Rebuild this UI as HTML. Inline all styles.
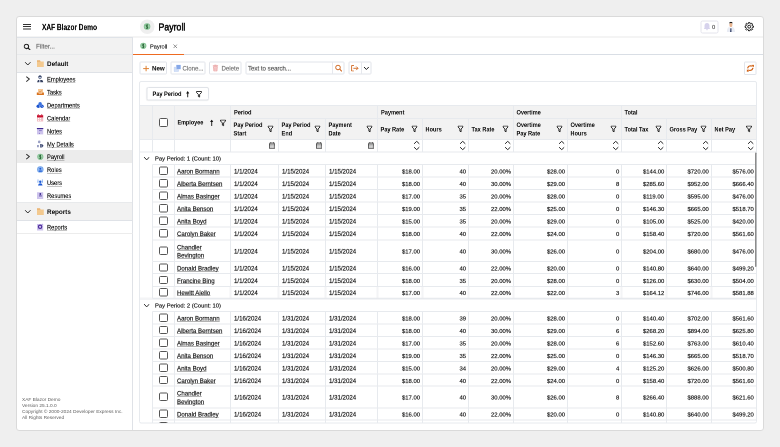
<!DOCTYPE html>
<html><head><meta charset="utf-8"><style>
html,body{margin:0;padding:0;}
body{width:780px;height:447px;background:#efefef;position:relative;overflow:hidden;font-family:"Liberation Sans", sans-serif;}
#w{position:absolute;left:0;top:0;width:1560px;height:894px;transform:scale(0.5);transform-origin:0 0;}
.r{position:absolute;}
.t{position:absolute;white-space:nowrap;will-change:transform;}
#grid{position:absolute;left:0;top:0;width:1560px;height:846.40px;overflow:hidden;}
</style></head><body><div id="w">
<div class="r" style="left:32.00px;top:32.00px;width:1496.00px;height:830.00px;background:#fff;border:2px solid #dadada;box-sizing:border-box;border-radius:6px"></div>
<div class="r" style="left:34.00px;top:73.00px;width:1492.00px;height:2.00px;background:#e9e9e9"></div>
<div class="r" style="left:46.00px;top:48.00px;width:16.40px;height:2.00px;background:#333"></div>
<div class="r" style="left:46.00px;top:52.40px;width:16.40px;height:2.00px;background:#333"></div>
<div class="r" style="left:46.00px;top:56.80px;width:16.40px;height:2.00px;background:#333"></div>
<div class="t" style="left:83.60px;top:44.40px;line-height:20px;font-size:16.20px;font-weight:700;color:#111;transform:scaleX(0.81);transform-origin:0 50%;-webkit-text-stroke:0.36px #111;">XAF Blazor Demo</div>
<div class="r" style="left:279.60px;top:38.60px;width:29.60px;height:29.60px;background:#efefef;border-radius:50%"></div>
<svg class="r" style="left:283.27px;top:43.32px;width:21.00px;height:21.00px" viewBox="0 0 10 10"><circle cx="5.3" cy="4.8" r="3.1" fill="#84c293"/><circle cx="5.3" cy="4.8" r="2.3" fill="#9fd0aa"/><path d="M5.9 3.3Q4.3 3.1 4.4 4.2Q4.6 4.9 5.4 5Q6.2 5.3 5.9 6.2Q5.2 6.8 4.3 6.3M5.4 2.8V7" fill="none" stroke="#1e5a2b" stroke-width="0.75"/></svg>
<div class="t" style="left:317.20px;top:43.60px;line-height:20px;font-size:20.00px;font-weight:400;color:#161616;transform:scaleX(0.875);transform-origin:0 50%;-webkit-text-stroke:1.20px #161616;">Payroll</div>
<div class="r" style="left:1400.60px;top:40.60px;width:36.40px;height:26.40px;border:2px solid #e4e4ec;border-radius:4px;box-sizing:border-box"></div>
<svg class="r" style="left:1407.00px;top:45.00px;width:14.00px;height:16.00px" viewBox="0 0 7 8"><path d="M3.5 0.6c-1.6 0-2.5 1.2-2.5 2.8v2.2L0.2 6.6h6.6L6 5.6V3.4C6 1.8 5.1 0.6 3.5 0.6z" fill="#d6d2ec"/><circle cx="3.5" cy="7.2" r="0.8" fill="#d6d2ec"/></svg>
<div class="t" style="left:1424.40px;top:44.00px;line-height:20px;font-size:11.60px;font-weight:400;color:#555;-webkit-text-stroke:0.34px #555;">0</div>
<svg class="r" style="left:1453.00px;top:42.80px;width:17.60px;height:21.20px" viewBox="0 0 8.8 10.6"><path d="M0.3 10.6 Q0.5 6.6 2.5 5.6 L4.4 6.6 L6.3 5.6 Q8.3 6.6 8.5 10.6z" fill="#e9ecf4"/><rect x="3.0" y="1.6" width="2.8" height="3.9" rx="1.2" fill="#e8b48f"/><path d="M2.5 2.4 Q2.6 0.3 4.4 0.3 Q6.2 0.3 6.3 2.4 L5.9 1.8 Q4.4 1.2 2.9 1.8z" fill="#1d1d1d"/><path d="M3.9 6.8 L4.9 6.8 L5.0 10.4 L3.6 10.4z" fill="#2f3d63"/></svg>
<svg class="r" style="left:1489.20px;top:43.80px;width:18.80px;height:18.80px" viewBox="0 0 9.4 9.4"><g transform="translate(4.7 4.7)"><path d="M3.16 -0.76 L4.31 -0.58 L4.31 0.58 L3.16 0.76 L2.77 1.70 L3.46 2.64 L2.64 3.46 L1.70 2.77 L0.76 3.16 L0.58 4.31 L-0.58 4.31 L-0.76 3.16 L-1.70 2.77 L-2.64 3.46 L-3.46 2.64 L-2.77 1.70 L-3.16 0.76 L-4.31 0.58 L-4.31 -0.58 L-3.16 -0.76 L-2.77 -1.70 L-3.46 -2.64 L-2.64 -3.46 L-1.70 -2.77 L-0.76 -3.16 L-0.58 -4.31 L0.58 -4.31 L0.76 -3.16 L1.70 -2.77 L2.64 -3.46 L3.46 -2.64 L2.77 -1.70Z" fill="none" stroke="#111" stroke-width="0.95" stroke-linejoin="round"/><circle r="1.45" fill="none" stroke="#111" stroke-width="0.95"/></g></svg>
<div class="r" style="left:264.00px;top:74.00px;width:2.00px;height:786.00px;background:#dfe2e7"></div>
<div class="r" style="left:34.00px;top:74.60px;width:230.00px;height:34.00px;background:#f2f2f2"></div>
<div class="r" style="left:34.00px;top:73.60px;width:231.00px;height:2.00px;background:#dfe3e8"></div>
<div class="r" style="left:34.00px;top:107.80px;width:231.00px;height:2.00px;background:#dfe2e7"></div>
<svg class="r" style="left:47.20px;top:87.00px;width:15.00px;height:13.00px" viewBox="0 0 7.5 6.5"><circle cx="2.9" cy="2.9" r="2.2" fill="none" stroke="#222" stroke-width="1.05"/><path d="M4.5 4.5 L6.7 6.5" stroke="#222" stroke-width="1.1"/></svg>
<div class="t" style="left:71.60px;top:83.20px;line-height:20px;font-size:12.60px;font-weight:400;color:#6f6f6f;-webkit-text-stroke:0.34px #6f6f6f;">Filter...</div>
<div class="r" style="left:34.00px;top:109.20px;width:230.00px;height:36.00px;background:#f2f2f2"></div>
<div class="r" style="left:34.00px;top:144.20px;width:231.00px;height:2.00px;background:#dfe2e7"></div>
<svg class="r" style="left:49.20px;top:122.80px;width:13.20px;height:8.80px" viewBox="0 0 6.6 4.4"><path d="M0.6 0.7 L3.3 3.5 L6 0.7" fill="none" stroke="#2a2a2a" stroke-width="1"/></svg>
<svg class="r" style="left:70.00px;top:117.20px;width:20.00px;height:20.00px" viewBox="0 0 10 10"><path d="M2 2h3l0.5 1H8.8V8.4H2z" fill="#f3c98f"/><path d="M2 2h3l0.5 1H2z" fill="#e6a661"/></svg>
<div class="t" style="left:93.80px;top:117.60px;line-height:20px;font-size:13.00px;font-weight:700;color:#111;transform:scaleX(0.97);transform-origin:0 50%;-webkit-text-stroke:0.08px #111;">Default</div>
<svg class="r" style="left:51.40px;top:152.20px;width:9.60px;height:12.40px" viewBox="0 0 4.8 6.2"><path d="M0.8 0.6 L3.8 3.1 L0.8 5.6" fill="none" stroke="#333" stroke-width="1.05"/></svg>
<svg class="r" style="left:70.00px;top:148.40px;width:20.00px;height:20.00px" viewBox="0 0 10 10"><circle cx="5.0" cy="3.3" r="1.45" fill="#c2c7dc" stroke="#3b4a6b" stroke-width="0.6"/><path d="M3.5 3.0Q3.6 1.6 5 1.6Q6.4 1.6 6.5 3.0z" fill="#3b4a6b"/><path d="M2 8.3L3 6.1H4.2L4 8.3z" fill="#34405e"/><path d="M5.1 6.1H6.9Q8.2 6.7 8.2 8.3H5.3z" fill="#34405e"/><path d="M4.1 6.3h1.1v2H4z" fill="#a9b1cb"/></svg>
<div class="t" style="left:93.80px;top:149.20px;line-height:20px;font-size:11.90px;font-weight:400;color:#1a1a1a;transform:scaleX(0.965);transform-origin:0 50%;-webkit-text-stroke:0.34px #1a1a1a;text-decoration:underline;text-decoration-color:#8a8a8a;text-underline-offset:2px;text-decoration-thickness:1px">Employees</div>
<svg class="r" style="left:70.00px;top:174.26px;width:20.00px;height:20.00px" viewBox="0 0 10 10"><path d="M3 2h5v4.2H3z" fill="#f5c795"/><path d="M4 4.4L5 5.3 6.6 3.8" fill="none" stroke="#d9731f" stroke-width="0.7"/><path d="M1.8 5.6H3.2L3.8 6.6H7L7.5 5.6H8.9V8.1H1.8z" fill="#d9731f"/></svg>
<div class="t" style="left:93.80px;top:175.06px;line-height:20px;font-size:11.90px;font-weight:400;color:#1a1a1a;transform:scaleX(0.965);transform-origin:0 50%;-webkit-text-stroke:0.34px #1a1a1a;text-decoration:underline;text-decoration-color:#8a8a8a;text-underline-offset:2px;text-decoration-thickness:1px">Tasks</div>
<svg class="r" style="left:70.00px;top:200.12px;width:20.00px;height:20.00px" viewBox="0 0 10 10"><circle cx="5.1" cy="3.9" r="1.8" fill="#3b74e0"/><circle cx="3.3" cy="6.3" r="1.8" fill="#1d55d0"/><circle cx="6.9" cy="6.3" r="1.8" fill="#1d55d0"/><circle cx="4.3" cy="5.8" r="0.4" fill="#fff"/><circle cx="4.8" cy="6.6" r="0.4" fill="#fff"/><circle cx="6.2" cy="5.8" r="0.4" fill="#fff"/><circle cx="7.2" cy="6.6" r="0.4" fill="#fff"/></svg>
<div class="t" style="left:93.80px;top:200.92px;line-height:20px;font-size:11.90px;font-weight:400;color:#1a1a1a;transform:scaleX(0.965);transform-origin:0 50%;-webkit-text-stroke:0.34px #1a1a1a;text-decoration:underline;text-decoration-color:#8a8a8a;text-underline-offset:2px;text-decoration-thickness:1px">Departments</div>
<svg class="r" style="left:70.00px;top:225.98px;width:20.00px;height:20.00px" viewBox="0 0 10 10"><path d="M2 4.2h6.2v4.3H2z" fill="#f1bcc3"/><path d="M2 2.2h6.2v2.2H2z" fill="#c8102e"/><circle cx="3.3" cy="1.8" r="0.6" fill="#c8102e"/><circle cx="6.7" cy="1.8" r="0.6" fill="#c8102e"/><path d="M3 5h1v1H3zM4.9 5h1v1h-1zM3 6.8h1v1H3zM4.9 6.8h1v1h-1z" fill="#fff"/></svg>
<div class="t" style="left:93.80px;top:226.78px;line-height:20px;font-size:11.90px;font-weight:400;color:#1a1a1a;transform:scaleX(0.965);transform-origin:0 50%;-webkit-text-stroke:0.34px #1a1a1a;text-decoration:underline;text-decoration-color:#8a8a8a;text-underline-offset:2px;text-decoration-thickness:1px">Calendar</div>
<svg class="r" style="left:70.00px;top:251.84px;width:20.00px;height:20.00px" viewBox="0 0 10 10"><path d="M2 3h6.2v5.4H2z" fill="#cdc3ec"/><path d="M1.9 2h6.4v1.1H1.9z" fill="#3d2a8f"/><path d="M4 4.6h2.8" stroke="#6d5cb8" stroke-width="0.7"/><circle cx="4.4" cy="7.3" r="0.5" fill="#6d5cb8"/></svg>
<div class="t" style="left:93.80px;top:252.64px;line-height:20px;font-size:11.90px;font-weight:400;color:#1a1a1a;transform:scaleX(0.965);transform-origin:0 50%;-webkit-text-stroke:0.34px #1a1a1a;text-decoration:underline;text-decoration-color:#8a8a8a;text-underline-offset:2px;text-decoration-thickness:1px">Notes</div>
<svg class="r" style="left:70.00px;top:277.70px;width:20.00px;height:20.00px" viewBox="0 0 10 10"><circle cx="4.2" cy="2.9" r="1.3" fill="#9aa0c4"/><path d="M2 6h1.9v2.2H2z" fill="#9aa0c4"/><path d="M5 5.1H7L8.6 6.8 7 8.5H5z" fill="#3a4670"/><path d="M6.1 5.1v3.4" stroke="#fff" stroke-width="0.5"/></svg>
<div class="t" style="left:93.80px;top:278.50px;line-height:20px;font-size:11.90px;font-weight:400;color:#1a1a1a;transform:scaleX(0.965);transform-origin:0 50%;-webkit-text-stroke:0.34px #1a1a1a;text-decoration:underline;text-decoration-color:#8a8a8a;text-underline-offset:2px;text-decoration-thickness:1px">My Details</div>
<div class="r" style="left:34.00px;top:300.36px;width:230.00px;height:25.86px;background:#ececec"></div>
<svg class="r" style="left:51.40px;top:307.36px;width:9.60px;height:12.40px" viewBox="0 0 4.8 6.2"><path d="M0.8 0.6 L3.8 3.1 L0.8 5.6" fill="none" stroke="#333" stroke-width="1.05"/></svg>
<svg class="r" style="left:70.00px;top:303.56px;width:20.00px;height:20.00px" viewBox="0 0 10 10"><circle cx="5.3" cy="4.8" r="3.1" fill="#84c293"/><circle cx="5.3" cy="4.8" r="2.3" fill="#9fd0aa"/><path d="M5.9 3.3Q4.3 3.1 4.4 4.2Q4.6 4.9 5.4 5Q6.2 5.3 5.9 6.2Q5.2 6.8 4.3 6.3M5.4 2.8V7" fill="none" stroke="#1e5a2b" stroke-width="0.75"/></svg>
<div class="t" style="left:93.80px;top:304.36px;line-height:20px;font-size:11.90px;font-weight:400;color:#1a1a1a;transform:scaleX(0.965);transform-origin:0 50%;-webkit-text-stroke:0.34px #1a1a1a;text-decoration:underline;text-decoration-color:#8a8a8a;text-underline-offset:2px;text-decoration-thickness:1px">Payroll</div>
<svg class="r" style="left:70.00px;top:329.42px;width:20.00px;height:20.00px" viewBox="0 0 10 10"><circle cx="5.3" cy="4.9" r="3.2" fill="#6fa2ea"/><circle cx="5.3" cy="4.9" r="2.5" fill="#8db6f0"/><circle cx="5.3" cy="4.3" r="0.95" fill="#1f5bd6"/><path d="M3.9 6h2.9v1.2H3.9z" fill="#1f5bd6"/></svg>
<div class="t" style="left:93.80px;top:330.22px;line-height:20px;font-size:11.90px;font-weight:400;color:#1a1a1a;transform:scaleX(0.965);transform-origin:0 50%;-webkit-text-stroke:0.34px #1a1a1a;text-decoration:underline;text-decoration-color:#8a8a8a;text-underline-offset:2px;text-decoration-thickness:1px">Roles</div>
<svg class="r" style="left:70.00px;top:355.28px;width:20.00px;height:20.00px" viewBox="0 0 10 10"><circle cx="5.3" cy="4.3" r="1.2" fill="#1f5bd6"/><path d="M3 7.9Q3.4 5.8 5.3 5.8Q7.2 5.8 7.6 7.9z" fill="#1f5bd6"/><circle cx="3" cy="2.6" r="0.7" fill="#6ea0f0"/><path d="M2.4 3.5h1.1v1.8H2.4z" fill="#8ab4f2"/><circle cx="7.4" cy="2.6" r="0.7" fill="#6ea0f0"/><path d="M6.9 3.5h1.1v1.8H6.9z" fill="#8ab4f2"/></svg>
<div class="t" style="left:93.80px;top:356.08px;line-height:20px;font-size:11.90px;font-weight:400;color:#1a1a1a;transform:scaleX(0.965);transform-origin:0 50%;-webkit-text-stroke:0.34px #1a1a1a;text-decoration:underline;text-decoration-color:#8a8a8a;text-underline-offset:2px;text-decoration-thickness:1px">Users</div>
<svg class="r" style="left:70.00px;top:381.14px;width:20.00px;height:20.00px" viewBox="0 0 10 10"><path d="M2 1.7h6.2v6.8H2z" fill="#cdc3ec"/><circle cx="5.3" cy="3.5" r="0.9" fill="#3d2a8f"/><path d="M4 5.1h2.8v0.8H4z" fill="#4a3a9a"/><path d="M4 6.6h2.8" stroke="#e9e4f7" stroke-width="0.6"/></svg>
<div class="t" style="left:93.80px;top:381.94px;line-height:20px;font-size:11.90px;font-weight:400;color:#1a1a1a;transform:scaleX(0.965);transform-origin:0 50%;-webkit-text-stroke:0.34px #1a1a1a;text-decoration:underline;text-decoration-color:#8a8a8a;text-underline-offset:2px;text-decoration-thickness:1px">Resumes</div>
<div class="r" style="left:34.00px;top:404.00px;width:231.00px;height:2.00px;background:#dfe2e7"></div>
<div class="r" style="left:34.00px;top:405.20px;width:230.00px;height:36.00px;background:#f2f2f2"></div>
<div class="r" style="left:34.00px;top:440.20px;width:231.00px;height:2.00px;background:#dfe2e7"></div>
<svg class="r" style="left:49.20px;top:418.80px;width:13.20px;height:8.80px" viewBox="0 0 6.6 4.4"><path d="M0.6 0.7 L3.3 3.5 L6 0.7" fill="none" stroke="#2a2a2a" stroke-width="1"/></svg>
<svg class="r" style="left:70.00px;top:413.20px;width:20.00px;height:20.00px" viewBox="0 0 10 10"><path d="M2 2h3l0.5 1H8.8V8.4H2z" fill="#f3c98f"/><path d="M2 2h3l0.5 1H2z" fill="#e6a661"/></svg>
<div class="t" style="left:93.80px;top:413.60px;line-height:20px;font-size:13.00px;font-weight:700;color:#111;transform:scaleX(0.97);transform-origin:0 50%;-webkit-text-stroke:0.08px #111;">Reports</div>
<svg class="r" style="left:70.00px;top:444.40px;width:20.00px;height:20.00px" viewBox="0 0 10 10"><path d="M2 2h6.2v6.5H2z" fill="#cdc3ec"/><circle cx="5.1" cy="4.8" r="1.7" fill="none" stroke="#4b2a9a" stroke-width="1.1"/><path d="M6.8 2.6l0.9-0.5" stroke="#8f7cd0" stroke-width="0.6"/></svg>
<div class="t" style="left:93.80px;top:445.20px;line-height:20px;font-size:11.90px;font-weight:400;color:#1a1a1a;transform:scaleX(0.965);transform-origin:0 50%;-webkit-text-stroke:0.34px #1a1a1a;text-decoration:underline;text-decoration-color:#8a8a8a;text-underline-offset:2px;text-decoration-thickness:1px">Reports</div>
<div class="r" style="left:34.00px;top:466.00px;width:231.00px;height:2.00px;background:#ececec"></div>
<div class="t" style="left:44.40px;top:792.60px;line-height:12px;font-size:9.60px;font-weight:400;color:#5e5e5e;">XAF Blazor Demo</div>
<div class="t" style="left:44.40px;top:804.80px;line-height:12px;font-size:9.60px;font-weight:400;color:#5e5e5e;">Version 25.1.0.0</div>
<div class="t" style="left:44.40px;top:817.00px;line-height:12px;font-size:9.60px;font-weight:400;color:#5e5e5e;">Copyright © 2000-2024 Developer Express Inc.</div>
<div class="t" style="left:44.40px;top:829.20px;line-height:12px;font-size:9.60px;font-weight:400;color:#5e5e5e;">All Rights Reserved</div>
<div class="r" style="left:265.00px;top:108.00px;width:1261.00px;height:2.00px;background:#d9dee5"></div>
<svg class="r" style="left:276.20px;top:82.40px;width:20.00px;height:20.00px" viewBox="0 0 10 10"><circle cx="5.3" cy="4.8" r="3.1" fill="#84c293"/><circle cx="5.3" cy="4.8" r="2.3" fill="#9fd0aa"/><path d="M5.9 3.3Q4.3 3.1 4.4 4.2Q4.6 4.9 5.4 5Q6.2 5.3 5.9 6.2Q5.2 6.8 4.3 6.3M5.4 2.8V7" fill="none" stroke="#1e5a2b" stroke-width="0.75"/></svg>
<div class="t" style="left:299.60px;top:82.80px;line-height:20px;font-size:11.80px;font-weight:400;color:#1a1a1a;transform:scaleX(0.95);transform-origin:0 50%;-webkit-text-stroke:0.34px #1a1a1a;">Payroll</div>
<svg class="r" style="left:346.00px;top:87.60px;width:9.20px;height:9.20px" viewBox="0 0 4.6 4.6"><path d="M0.5 0.5L4.1 4.1M4.1 0.5L0.5 4.1" stroke="#666" stroke-width="0.7"/></svg>
<div class="r" style="left:266.00px;top:107.60px;width:102.00px;height:2.40px;background:#ee6a21"></div>
<div class="r" style="left:278.60px;top:123.00px;width:55.40px;height:26.20px;border:2px solid #e1e4ea;border-radius:2.5px;box-sizing:border-box;background:#fff"></div>
<svg class="r" style="left:285.60px;top:130.60px;width:12.40px;height:12.40px" viewBox="0 0 6.2 6.2"><path d="M3.1 0.2V6M0.2 3.1H6" stroke="#dd7d2c" stroke-width="0.95"/></svg>
<div class="t" style="left:303.80px;top:127.20px;line-height:20px;font-size:12.40px;font-weight:700;color:#111;-webkit-text-stroke:0.08px #111;">New</div>
<div class="r" style="left:341.40px;top:123.00px;width:69.60px;height:26.20px;border:2px solid #e1e4ea;border-radius:2.5px;box-sizing:border-box;background:#fff"></div>
<svg class="r" style="left:347.00px;top:129.20px;width:15.00px;height:14.40px" viewBox="0 0 7.5 7.2"><rect x="2.8" y="0.3" width="4.4" height="4.4" fill="#86a8e8"/><path d="M0.5 2.8H2.6V5H5V6.9H0.5z" fill="#d5e2f7" stroke="#b6cbf0" stroke-width="0.5"/></svg>
<div class="t" style="left:365.40px;top:127.20px;line-height:20px;font-size:12.20px;font-weight:400;color:#777;-webkit-text-stroke:0.34px #777;">Clone...</div>
<div class="r" style="left:418.40px;top:123.00px;width:64.80px;height:26.20px;border:2px solid #e1e4ea;border-radius:2.5px;box-sizing:border-box;background:#fff"></div>
<svg class="r" style="left:425.20px;top:129.00px;width:11.60px;height:14.40px" viewBox="0 0 5.8 7.2"><path d="M0.2 1.3h5.4" stroke="#e48a8a" stroke-width="0.8"/><path d="M1.9 0.4h2" stroke="#e48a8a" stroke-width="0.7"/><path d="M1 2.2h3.8l-0.35 4.5H1.35z" fill="#fbe3e3" stroke="#e48a8a" stroke-width="0.6"/><path d="M2.3 3v3M3.5 3v3" stroke="#e48a8a" stroke-width="0.5"/></svg>
<div class="t" style="left:443.00px;top:127.20px;line-height:20px;font-size:12.20px;font-weight:400;color:#777;-webkit-text-stroke:0.34px #777;">Delete</div>
<div class="r" style="left:491.20px;top:123.00px;width:198.20px;height:26.20px;border:2px solid #e1e4ea;border-radius:2.5px;box-sizing:border-box;background:#fff"></div>
<div class="r" style="left:664.00px;top:124.00px;width:2.00px;height:24.20px;background:#e6e8ed"></div>
<div class="t" style="left:496.20px;top:127.00px;line-height:20px;font-size:12.20px;font-weight:400;color:#555;-webkit-text-stroke:0.34px #555;">Text to search...</div>
<svg class="r" style="left:669.60px;top:129.20px;width:14.80px;height:14.80px" viewBox="0 0 7.4 7.4"><circle cx="3" cy="3" r="2.3" fill="none" stroke="#d0661f" stroke-width="1"/><path d="M4.7 4.7L6.9 6.9" stroke="#d0661f" stroke-width="1.1"/></svg>
<div class="r" style="left:697.20px;top:123.00px;width:46.20px;height:26.20px;border:2px solid #e1e4ea;border-radius:2.5px;box-sizing:border-box;background:#fff"></div>
<div class="r" style="left:722.40px;top:124.00px;width:2.00px;height:24.20px;background:#e6e8ed"></div>
<svg class="r" style="left:702.40px;top:129.60px;width:15.20px;height:13.20px" viewBox="0 0 7.6 6.6"><path d="M3 0.5H0.6v5.6H3" fill="none" stroke="#d0661f" stroke-width="0.9"/><path d="M2.4 3.3H7M5.2 1.5L7 3.3 5.2 5.1" fill="none" stroke="#d0661f" stroke-width="0.9"/></svg>
<svg class="r" style="left:727.00px;top:132.80px;width:11.60px;height:7.20px" viewBox="0 0 5.8 3.6"><path d="M0.5 0.5L2.9 3 5.3 0.5" fill="none" stroke="#222" stroke-width="1"/></svg>
<div class="r" style="left:1488.40px;top:122.80px;width:24.80px;height:26.80px;border:2px solid #e1e4ea;border-radius:2px;box-sizing:border-box;background:#fff"></div>
<svg class="r" style="left:1493.40px;top:129.20px;width:15.20px;height:14.80px" viewBox="0 0 7.6 7.4"><path d="M1.1 3.9Q1.6 1.4 4.2 1.3Q5.3 1.3 6.0 1.9" fill="none" stroke="#cf5f12" stroke-width="1.1"/><path d="M5.0 0.3L7.5 0.2 7.2 2.9z" fill="#cf5f12"/><path d="M6.5 3.4Q6.0 5.9 3.4 6.0Q2.3 6.0 1.6 5.4" fill="none" stroke="#cf5f12" stroke-width="1.1"/><path d="M2.6 7.1L0.1 7.2 0.4 4.5z" fill="#cf5f12"/></svg>
<div class="r" style="left:277.60px;top:161.60px;width:1236.80px;height:685.80px;border:2px solid #e7eaee;box-sizing:border-box;border-radius:4px"></div>
<div class="r" style="left:293.40px;top:174.20px;width:124.80px;height:27.00px;border:2px solid #e0e3e8;border-radius:4px;box-sizing:border-box;box-shadow:0 1px 2px rgba(0,0,0,0.08)"></div>
<div class="t" style="left:305.00px;top:178.20px;line-height:20px;font-size:12.20px;font-weight:700;color:#161616;transform:scaleX(0.92);transform-origin:0 50%;-webkit-text-stroke:0.10px #161616;">Pay Period</div>
<svg class="r" style="left:371.80px;top:182.00px;width:6.80px;height:13.20px" viewBox="0 0 3.4 6.6"><path d="M1.7 1.6V6.5" stroke="#111" stroke-width="0.9"/><path d="M0.1 2.4L1.7 0.1 3.3 2.4z" fill="#111"/></svg>
<svg class="r" style="left:391.60px;top:181.80px;width:12.00px;height:13.60px" viewBox="0 0 6 6.8"><path d="M0.5 0.5H5.5V1.5L3.6 3.5V6.3L2.4 5.7V3.5L0.5 1.5z" fill="none" stroke="#1a1a1a" stroke-width="0.9" stroke-linejoin="round"/></svg>
<div class="r" style="left:279.60px;top:210.80px;width:1232.80px;height:68.00px;background:#f2f2f2"></div>
<div class="r" style="left:278.60px;top:209.80px;width:1234.80px;height:2.00px;background:#e7eaee"></div>
<div class="r" style="left:461.00px;top:235.60px;width:1052.40px;height:2.00px;background:#e7eaee"></div>
<div class="r" style="left:278.60px;top:277.80px;width:1234.80px;height:2.00px;background:#e7eaee"></div>
<div class="r" style="left:278.60px;top:302.80px;width:1234.80px;height:2.00px;background:#e7eaee"></div>
<div class="r" style="left:304.40px;top:210.80px;width:2.00px;height:93.00px;background:#e7eaee"></div>
<div class="r" style="left:348.00px;top:210.80px;width:2.00px;height:93.00px;background:#e7eaee"></div>
<div class="r" style="left:460.00px;top:210.80px;width:2.00px;height:93.00px;background:#e7eaee"></div>
<div class="r" style="left:754.00px;top:210.80px;width:2.00px;height:93.00px;background:#e7eaee"></div>
<div class="r" style="left:1026.00px;top:210.80px;width:2.00px;height:93.00px;background:#e7eaee"></div>
<div class="r" style="left:1242.00px;top:210.80px;width:2.00px;height:93.00px;background:#e7eaee"></div>
<div class="r" style="left:556.20px;top:236.60px;width:2.00px;height:67.20px;background:#e7eaee"></div>
<div class="r" style="left:650.00px;top:236.60px;width:2.00px;height:67.20px;background:#e7eaee"></div>
<div class="r" style="left:844.00px;top:236.60px;width:2.00px;height:67.20px;background:#e7eaee"></div>
<div class="r" style="left:936.00px;top:236.60px;width:2.00px;height:67.20px;background:#e7eaee"></div>
<div class="r" style="left:1133.60px;top:236.60px;width:2.00px;height:67.20px;background:#e7eaee"></div>
<div class="r" style="left:1331.80px;top:236.60px;width:2.00px;height:67.20px;background:#e7eaee"></div>
<div class="r" style="left:1421.60px;top:236.60px;width:2.00px;height:67.20px;background:#e7eaee"></div>
<div class="r" style="left:318.00px;top:236.40px;width:18.00px;height:17.40px;border:2px solid #555;border-radius:3px;box-sizing:border-box;background:#fff"></div>
<div class="t" style="left:354.60px;top:235.00px;line-height:20px;font-size:12.40px;font-weight:700;color:#161616;transform:scaleX(0.88);transform-origin:0 50%;-webkit-text-stroke:0.10px #161616;">Employee</div>
<svg class="r" style="left:419.80px;top:239.20px;width:6.80px;height:13.20px" viewBox="0 0 3.4 6.6"><path d="M1.7 1.6V6.5" stroke="#111" stroke-width="0.9"/><path d="M0.1 2.4L1.7 0.1 3.3 2.4z" fill="#111"/></svg>
<svg class="r" style="left:439.60px;top:239.00px;width:12.00px;height:13.60px" viewBox="0 0 6 6.8"><path d="M0.5 0.5H5.5V1.5L3.6 3.5V6.3L2.4 5.7V3.5L0.5 1.5z" fill="none" stroke="#1a1a1a" stroke-width="0.9" stroke-linejoin="round"/></svg>
<div class="t" style="left:467.60px;top:214.60px;line-height:20px;font-size:12.20px;font-weight:700;color:#161616;transform:scaleX(0.92);transform-origin:0 50%;-webkit-text-stroke:0.10px #161616;">Period</div>
<div class="t" style="left:761.60px;top:214.60px;line-height:20px;font-size:12.20px;font-weight:700;color:#161616;transform:scaleX(0.92);transform-origin:0 50%;-webkit-text-stroke:0.10px #161616;">Payment</div>
<div class="t" style="left:1033.20px;top:214.60px;line-height:20px;font-size:12.20px;font-weight:700;color:#161616;transform:scaleX(0.92);transform-origin:0 50%;-webkit-text-stroke:0.10px #161616;">Overtime</div>
<div class="t" style="left:1249.20px;top:214.60px;line-height:20px;font-size:12.20px;font-weight:700;color:#161616;transform:scaleX(0.92);transform-origin:0 50%;-webkit-text-stroke:0.10px #161616;">Total</div>
<div class="t" style="left:467.20px;top:240.00px;line-height:20px;font-size:12.20px;font-weight:700;color:#161616;transform:scaleX(0.92);transform-origin:0 50%;-webkit-text-stroke:0.10px #161616;">Pay Period</div>
<div class="t" style="left:467.20px;top:256.60px;line-height:20px;font-size:12.20px;font-weight:700;color:#161616;transform:scaleX(0.92);transform-origin:0 50%;-webkit-text-stroke:0.10px #161616;">Start</div>
<svg class="r" style="left:535.40px;top:251.20px;width:12.00px;height:13.60px" viewBox="0 0 6 6.8"><path d="M0.5 0.5H5.5V1.5L3.6 3.5V6.3L2.4 5.7V3.5L0.5 1.5z" fill="none" stroke="#1a1a1a" stroke-width="0.9" stroke-linejoin="round"/></svg>
<div class="t" style="left:563.40px;top:240.00px;line-height:20px;font-size:12.20px;font-weight:700;color:#161616;transform:scaleX(0.92);transform-origin:0 50%;-webkit-text-stroke:0.10px #161616;">Pay Period</div>
<div class="t" style="left:563.40px;top:256.60px;line-height:20px;font-size:12.20px;font-weight:700;color:#161616;transform:scaleX(0.92);transform-origin:0 50%;-webkit-text-stroke:0.10px #161616;">End</div>
<svg class="r" style="left:629.20px;top:251.20px;width:12.00px;height:13.60px" viewBox="0 0 6 6.8"><path d="M0.5 0.5H5.5V1.5L3.6 3.5V6.3L2.4 5.7V3.5L0.5 1.5z" fill="none" stroke="#1a1a1a" stroke-width="0.9" stroke-linejoin="round"/></svg>
<div class="t" style="left:657.20px;top:240.00px;line-height:20px;font-size:12.20px;font-weight:700;color:#161616;transform:scaleX(0.92);transform-origin:0 50%;-webkit-text-stroke:0.10px #161616;">Payment</div>
<div class="t" style="left:657.20px;top:256.60px;line-height:20px;font-size:12.20px;font-weight:700;color:#161616;transform:scaleX(0.92);transform-origin:0 50%;-webkit-text-stroke:0.10px #161616;">Date</div>
<svg class="r" style="left:733.20px;top:251.20px;width:12.00px;height:13.60px" viewBox="0 0 6 6.8"><path d="M0.5 0.5H5.5V1.5L3.6 3.5V6.3L2.4 5.7V3.5L0.5 1.5z" fill="none" stroke="#1a1a1a" stroke-width="0.9" stroke-linejoin="round"/></svg>
<div class="t" style="left:761.20px;top:248.60px;line-height:20px;font-size:12.20px;font-weight:700;color:#161616;transform:scaleX(0.92);transform-origin:0 50%;-webkit-text-stroke:0.10px #161616;">Pay Rate</div>
<svg class="r" style="left:823.20px;top:251.20px;width:12.00px;height:13.60px" viewBox="0 0 6 6.8"><path d="M0.5 0.5H5.5V1.5L3.6 3.5V6.3L2.4 5.7V3.5L0.5 1.5z" fill="none" stroke="#1a1a1a" stroke-width="0.9" stroke-linejoin="round"/></svg>
<div class="t" style="left:851.20px;top:248.60px;line-height:20px;font-size:12.20px;font-weight:700;color:#161616;transform:scaleX(0.92);transform-origin:0 50%;-webkit-text-stroke:0.10px #161616;">Hours</div>
<svg class="r" style="left:915.20px;top:251.20px;width:12.00px;height:13.60px" viewBox="0 0 6 6.8"><path d="M0.5 0.5H5.5V1.5L3.6 3.5V6.3L2.4 5.7V3.5L0.5 1.5z" fill="none" stroke="#1a1a1a" stroke-width="0.9" stroke-linejoin="round"/></svg>
<div class="t" style="left:943.20px;top:248.60px;line-height:20px;font-size:12.20px;font-weight:700;color:#161616;transform:scaleX(0.92);transform-origin:0 50%;-webkit-text-stroke:0.10px #161616;">Tax Rate</div>
<svg class="r" style="left:1005.20px;top:251.20px;width:12.00px;height:13.60px" viewBox="0 0 6 6.8"><path d="M0.5 0.5H5.5V1.5L3.6 3.5V6.3L2.4 5.7V3.5L0.5 1.5z" fill="none" stroke="#1a1a1a" stroke-width="0.9" stroke-linejoin="round"/></svg>
<div class="t" style="left:1033.20px;top:240.00px;line-height:20px;font-size:12.20px;font-weight:700;color:#161616;transform:scaleX(0.92);transform-origin:0 50%;-webkit-text-stroke:0.10px #161616;">Overtime</div>
<div class="t" style="left:1033.20px;top:256.60px;line-height:20px;font-size:12.20px;font-weight:700;color:#161616;transform:scaleX(0.92);transform-origin:0 50%;-webkit-text-stroke:0.10px #161616;">Pay Rate</div>
<svg class="r" style="left:1112.80px;top:251.20px;width:12.00px;height:13.60px" viewBox="0 0 6 6.8"><path d="M0.5 0.5H5.5V1.5L3.6 3.5V6.3L2.4 5.7V3.5L0.5 1.5z" fill="none" stroke="#1a1a1a" stroke-width="0.9" stroke-linejoin="round"/></svg>
<div class="t" style="left:1140.80px;top:240.00px;line-height:20px;font-size:12.20px;font-weight:700;color:#161616;transform:scaleX(0.92);transform-origin:0 50%;-webkit-text-stroke:0.10px #161616;">Overtime</div>
<div class="t" style="left:1140.80px;top:256.60px;line-height:20px;font-size:12.20px;font-weight:700;color:#161616;transform:scaleX(0.92);transform-origin:0 50%;-webkit-text-stroke:0.10px #161616;">Hours</div>
<svg class="r" style="left:1221.20px;top:251.20px;width:12.00px;height:13.60px" viewBox="0 0 6 6.8"><path d="M0.5 0.5H5.5V1.5L3.6 3.5V6.3L2.4 5.7V3.5L0.5 1.5z" fill="none" stroke="#1a1a1a" stroke-width="0.9" stroke-linejoin="round"/></svg>
<div class="t" style="left:1249.20px;top:248.60px;line-height:20px;font-size:12.20px;font-weight:700;color:#161616;transform:scaleX(0.92);transform-origin:0 50%;-webkit-text-stroke:0.10px #161616;">Total Tax</div>
<svg class="r" style="left:1311.00px;top:251.20px;width:12.00px;height:13.60px" viewBox="0 0 6 6.8"><path d="M0.5 0.5H5.5V1.5L3.6 3.5V6.3L2.4 5.7V3.5L0.5 1.5z" fill="none" stroke="#1a1a1a" stroke-width="0.9" stroke-linejoin="round"/></svg>
<div class="t" style="left:1339.00px;top:248.60px;line-height:20px;font-size:12.20px;font-weight:700;color:#161616;transform:scaleX(0.92);transform-origin:0 50%;-webkit-text-stroke:0.10px #161616;">Gross Pay</div>
<svg class="r" style="left:1400.80px;top:251.20px;width:12.00px;height:13.60px" viewBox="0 0 6 6.8"><path d="M0.5 0.5H5.5V1.5L3.6 3.5V6.3L2.4 5.7V3.5L0.5 1.5z" fill="none" stroke="#1a1a1a" stroke-width="0.9" stroke-linejoin="round"/></svg>
<div class="t" style="left:1428.80px;top:248.60px;line-height:20px;font-size:12.20px;font-weight:700;color:#161616;transform:scaleX(0.92);transform-origin:0 50%;-webkit-text-stroke:0.10px #161616;">Net Pay</div>
<svg class="r" style="left:1491.60px;top:251.20px;width:12.00px;height:13.60px" viewBox="0 0 6 6.8"><path d="M0.5 0.5H5.5V1.5L3.6 3.5V6.3L2.4 5.7V3.5L0.5 1.5z" fill="none" stroke="#1a1a1a" stroke-width="0.9" stroke-linejoin="round"/></svg>
<svg class="r" style="left:537.80px;top:283.80px;width:12.40px;height:14.20px" viewBox="0 0 6.2 7.1"><rect x="0.45" y="1.1" width="5.3" height="5.6" rx="0.4" fill="none" stroke="#2e2e2e" stroke-width="0.8"/><path d="M0.5 2.9H5.7" stroke="#2e2e2e" stroke-width="0.7"/><path d="M1.8 0.2V1.5M4.4 0.2V1.5" stroke="#2e2e2e" stroke-width="0.8"/><rect x="1.2" y="3.5" width="3.8" height="2.6" fill="#b5b5b5"/><path d="M3.1 3.5V6.1M1.2 4.8H5" stroke="#fff" stroke-width="0.35"/></svg>
<svg class="r" style="left:631.60px;top:283.80px;width:12.40px;height:14.20px" viewBox="0 0 6.2 7.1"><rect x="0.45" y="1.1" width="5.3" height="5.6" rx="0.4" fill="none" stroke="#2e2e2e" stroke-width="0.8"/><path d="M0.5 2.9H5.7" stroke="#2e2e2e" stroke-width="0.7"/><path d="M1.8 0.2V1.5M4.4 0.2V1.5" stroke="#2e2e2e" stroke-width="0.8"/><rect x="1.2" y="3.5" width="3.8" height="2.6" fill="#b5b5b5"/><path d="M3.1 3.5V6.1M1.2 4.8H5" stroke="#fff" stroke-width="0.35"/></svg>
<svg class="r" style="left:735.60px;top:283.80px;width:12.40px;height:14.20px" viewBox="0 0 6.2 7.1"><rect x="0.45" y="1.1" width="5.3" height="5.6" rx="0.4" fill="none" stroke="#2e2e2e" stroke-width="0.8"/><path d="M0.5 2.9H5.7" stroke="#2e2e2e" stroke-width="0.7"/><path d="M1.8 0.2V1.5M4.4 0.2V1.5" stroke="#2e2e2e" stroke-width="0.8"/><rect x="1.2" y="3.5" width="3.8" height="2.6" fill="#b5b5b5"/><path d="M3.1 3.5V6.1M1.2 4.8H5" stroke="#fff" stroke-width="0.35"/></svg>
<svg class="r" style="left:827.00px;top:281.20px;width:12.80px;height:20.00px" viewBox="0 0 6.4 10"><path d="M0.6 3.3L3.2 0.8 5.8 3.3M0.6 6.7L3.2 9.2 5.8 6.7" fill="none" stroke="#222" stroke-width="1.0"/></svg>
<svg class="r" style="left:919.00px;top:281.20px;width:12.80px;height:20.00px" viewBox="0 0 6.4 10"><path d="M0.6 3.3L3.2 0.8 5.8 3.3M0.6 6.7L3.2 9.2 5.8 6.7" fill="none" stroke="#222" stroke-width="1.0"/></svg>
<svg class="r" style="left:1009.00px;top:281.20px;width:12.80px;height:20.00px" viewBox="0 0 6.4 10"><path d="M0.6 3.3L3.2 0.8 5.8 3.3M0.6 6.7L3.2 9.2 5.8 6.7" fill="none" stroke="#222" stroke-width="1.0"/></svg>
<svg class="r" style="left:1116.60px;top:281.20px;width:12.80px;height:20.00px" viewBox="0 0 6.4 10"><path d="M0.6 3.3L3.2 0.8 5.8 3.3M0.6 6.7L3.2 9.2 5.8 6.7" fill="none" stroke="#222" stroke-width="1.0"/></svg>
<svg class="r" style="left:1225.00px;top:281.20px;width:12.80px;height:20.00px" viewBox="0 0 6.4 10"><path d="M0.6 3.3L3.2 0.8 5.8 3.3M0.6 6.7L3.2 9.2 5.8 6.7" fill="none" stroke="#222" stroke-width="1.0"/></svg>
<svg class="r" style="left:1314.80px;top:281.20px;width:12.80px;height:20.00px" viewBox="0 0 6.4 10"><path d="M0.6 3.3L3.2 0.8 5.8 3.3M0.6 6.7L3.2 9.2 5.8 6.7" fill="none" stroke="#222" stroke-width="1.0"/></svg>
<svg class="r" style="left:1404.60px;top:281.20px;width:12.80px;height:20.00px" viewBox="0 0 6.4 10"><path d="M0.6 3.3L3.2 0.8 5.8 3.3M0.6 6.7L3.2 9.2 5.8 6.7" fill="none" stroke="#222" stroke-width="1.0"/></svg>
<svg class="r" style="left:1495.40px;top:281.20px;width:12.80px;height:20.00px" viewBox="0 0 6.4 10"><path d="M0.6 3.3L3.2 0.8 5.8 3.3M0.6 6.7L3.2 9.2 5.8 6.7" fill="none" stroke="#222" stroke-width="1.0"/></svg>
<div id="grid">
<svg class="r" style="left:286.60px;top:313.00px;width:12.80px;height:8.40px" viewBox="0 0 6.4 4.2"><path d="M0.6 0.6L3.2 3.4 5.8 0.6" fill="none" stroke="#2a2a2a" stroke-width="1"/></svg>
<div class="t" style="left:309.60px;top:307.20px;line-height:20px;font-size:11.70px;font-weight:400;color:#141414;-webkit-text-stroke:0.34px #141414;">Pay Period: 1 (Count: 10)</div>
<div class="r" style="left:305.40px;top:327.60px;width:1208.00px;height:2.00px;background:#e7eaee"></div>
<div class="r" style="left:318.00px;top:332.90px;width:18.00px;height:16.80px;border:2px solid #555;border-radius:3px;box-sizing:border-box;background:#fff"></div>
<div class="t" style="left:354.00px;top:332.90px;line-height:20px;font-size:12.20px;font-weight:400;color:#141414;-webkit-text-stroke:0.34px #141414;text-decoration:underline;text-decoration-color:#666;text-underline-offset:1.4px;text-decoration-thickness:1px">Aaron Bormann</div>
<div class="t" style="left:467.60px;top:332.90px;line-height:20px;font-size:12.20px;font-weight:400;color:#141414;-webkit-text-stroke:0.34px #141414;">1/1/2024</div>
<div class="t" style="left:563.80px;top:332.90px;line-height:20px;font-size:12.20px;font-weight:400;color:#141414;-webkit-text-stroke:0.34px #141414;">1/15/2024</div>
<div class="t" style="left:657.60px;top:332.90px;line-height:20px;font-size:12.20px;font-weight:400;color:#141414;-webkit-text-stroke:0.34px #141414;">1/15/2024</div>
<div class="t" style="right:719.60px;top:332.90px;line-height:20px;font-size:11.80px;font-weight:400;color:#141414;-webkit-text-stroke:0.34px #141414;">$18.00</div>
<div class="t" style="right:627.60px;top:332.90px;line-height:20px;font-size:11.80px;font-weight:400;color:#141414;-webkit-text-stroke:0.34px #141414;">40</div>
<div class="t" style="right:537.60px;top:332.90px;line-height:20px;font-size:11.80px;font-weight:400;color:#141414;-webkit-text-stroke:0.34px #141414;">20.00%</div>
<div class="t" style="right:430.00px;top:332.90px;line-height:20px;font-size:11.80px;font-weight:400;color:#141414;-webkit-text-stroke:0.34px #141414;">$28.00</div>
<div class="t" style="right:321.60px;top:332.90px;line-height:20px;font-size:11.80px;font-weight:400;color:#141414;-webkit-text-stroke:0.34px #141414;">0</div>
<div class="t" style="right:231.80px;top:332.90px;line-height:20px;font-size:11.80px;font-weight:400;color:#141414;-webkit-text-stroke:0.34px #141414;">$144.00</div>
<div class="t" style="right:142.00px;top:332.90px;line-height:20px;font-size:11.80px;font-weight:400;color:#141414;-webkit-text-stroke:0.34px #141414;">$720.00</div>
<div class="t" style="right:52.80px;top:332.90px;line-height:20px;font-size:11.80px;font-weight:400;color:#141414;-webkit-text-stroke:0.34px #141414;">$576.00</div>
<div class="r" style="left:305.40px;top:353.00px;width:1208.00px;height:2.00px;background:#e7eaee"></div>
<div class="r" style="left:304.40px;top:328.60px;width:2.00px;height:25.40px;background:#e7eaee"></div>
<div class="r" style="left:348.00px;top:328.60px;width:2.00px;height:25.40px;background:#e7eaee"></div>
<div class="r" style="left:460.00px;top:328.60px;width:2.00px;height:25.40px;background:#e7eaee"></div>
<div class="r" style="left:556.20px;top:328.60px;width:2.00px;height:25.40px;background:#e7eaee"></div>
<div class="r" style="left:650.00px;top:328.60px;width:2.00px;height:25.40px;background:#e7eaee"></div>
<div class="r" style="left:754.00px;top:328.60px;width:2.00px;height:25.40px;background:#e7eaee"></div>
<div class="r" style="left:844.00px;top:328.60px;width:2.00px;height:25.40px;background:#e7eaee"></div>
<div class="r" style="left:936.00px;top:328.60px;width:2.00px;height:25.40px;background:#e7eaee"></div>
<div class="r" style="left:1026.00px;top:328.60px;width:2.00px;height:25.40px;background:#e7eaee"></div>
<div class="r" style="left:1133.60px;top:328.60px;width:2.00px;height:25.40px;background:#e7eaee"></div>
<div class="r" style="left:1242.00px;top:328.60px;width:2.00px;height:25.40px;background:#e7eaee"></div>
<div class="r" style="left:1331.80px;top:328.60px;width:2.00px;height:25.40px;background:#e7eaee"></div>
<div class="r" style="left:1421.60px;top:328.60px;width:2.00px;height:25.40px;background:#e7eaee"></div>
<div class="r" style="left:318.00px;top:358.10px;width:18.00px;height:16.80px;border:2px solid #555;border-radius:3px;box-sizing:border-box;background:#fff"></div>
<div class="t" style="left:354.00px;top:358.10px;line-height:20px;font-size:12.20px;font-weight:400;color:#141414;-webkit-text-stroke:0.34px #141414;text-decoration:underline;text-decoration-color:#666;text-underline-offset:1.4px;text-decoration-thickness:1px">Alberta Berntsen</div>
<div class="t" style="left:467.60px;top:358.10px;line-height:20px;font-size:12.20px;font-weight:400;color:#141414;-webkit-text-stroke:0.34px #141414;">1/1/2024</div>
<div class="t" style="left:563.80px;top:358.10px;line-height:20px;font-size:12.20px;font-weight:400;color:#141414;-webkit-text-stroke:0.34px #141414;">1/15/2024</div>
<div class="t" style="left:657.60px;top:358.10px;line-height:20px;font-size:12.20px;font-weight:400;color:#141414;-webkit-text-stroke:0.34px #141414;">1/15/2024</div>
<div class="t" style="right:719.60px;top:358.10px;line-height:20px;font-size:11.80px;font-weight:400;color:#141414;-webkit-text-stroke:0.34px #141414;">$18.00</div>
<div class="t" style="right:627.60px;top:358.10px;line-height:20px;font-size:11.80px;font-weight:400;color:#141414;-webkit-text-stroke:0.34px #141414;">40</div>
<div class="t" style="right:537.60px;top:358.10px;line-height:20px;font-size:11.80px;font-weight:400;color:#141414;-webkit-text-stroke:0.34px #141414;">30.00%</div>
<div class="t" style="right:430.00px;top:358.10px;line-height:20px;font-size:11.80px;font-weight:400;color:#141414;-webkit-text-stroke:0.34px #141414;">$29.00</div>
<div class="t" style="right:321.60px;top:358.10px;line-height:20px;font-size:11.80px;font-weight:400;color:#141414;-webkit-text-stroke:0.34px #141414;">8</div>
<div class="t" style="right:231.80px;top:358.10px;line-height:20px;font-size:11.80px;font-weight:400;color:#141414;-webkit-text-stroke:0.34px #141414;">$285.60</div>
<div class="t" style="right:142.00px;top:358.10px;line-height:20px;font-size:11.80px;font-weight:400;color:#141414;-webkit-text-stroke:0.34px #141414;">$952.00</div>
<div class="t" style="right:52.80px;top:358.10px;line-height:20px;font-size:11.80px;font-weight:400;color:#141414;-webkit-text-stroke:0.34px #141414;">$666.40</div>
<div class="r" style="left:305.40px;top:378.00px;width:1208.00px;height:2.00px;background:#e7eaee"></div>
<div class="r" style="left:304.40px;top:354.00px;width:2.00px;height:25.00px;background:#e7eaee"></div>
<div class="r" style="left:348.00px;top:354.00px;width:2.00px;height:25.00px;background:#e7eaee"></div>
<div class="r" style="left:460.00px;top:354.00px;width:2.00px;height:25.00px;background:#e7eaee"></div>
<div class="r" style="left:556.20px;top:354.00px;width:2.00px;height:25.00px;background:#e7eaee"></div>
<div class="r" style="left:650.00px;top:354.00px;width:2.00px;height:25.00px;background:#e7eaee"></div>
<div class="r" style="left:754.00px;top:354.00px;width:2.00px;height:25.00px;background:#e7eaee"></div>
<div class="r" style="left:844.00px;top:354.00px;width:2.00px;height:25.00px;background:#e7eaee"></div>
<div class="r" style="left:936.00px;top:354.00px;width:2.00px;height:25.00px;background:#e7eaee"></div>
<div class="r" style="left:1026.00px;top:354.00px;width:2.00px;height:25.00px;background:#e7eaee"></div>
<div class="r" style="left:1133.60px;top:354.00px;width:2.00px;height:25.00px;background:#e7eaee"></div>
<div class="r" style="left:1242.00px;top:354.00px;width:2.00px;height:25.00px;background:#e7eaee"></div>
<div class="r" style="left:1331.80px;top:354.00px;width:2.00px;height:25.00px;background:#e7eaee"></div>
<div class="r" style="left:1421.60px;top:354.00px;width:2.00px;height:25.00px;background:#e7eaee"></div>
<div class="r" style="left:318.00px;top:383.30px;width:18.00px;height:16.80px;border:2px solid #555;border-radius:3px;box-sizing:border-box;background:#fff"></div>
<div class="t" style="left:354.00px;top:383.30px;line-height:20px;font-size:12.20px;font-weight:400;color:#141414;-webkit-text-stroke:0.34px #141414;text-decoration:underline;text-decoration-color:#666;text-underline-offset:1.4px;text-decoration-thickness:1px">Almas Basinger</div>
<div class="t" style="left:467.60px;top:383.30px;line-height:20px;font-size:12.20px;font-weight:400;color:#141414;-webkit-text-stroke:0.34px #141414;">1/1/2024</div>
<div class="t" style="left:563.80px;top:383.30px;line-height:20px;font-size:12.20px;font-weight:400;color:#141414;-webkit-text-stroke:0.34px #141414;">1/15/2024</div>
<div class="t" style="left:657.60px;top:383.30px;line-height:20px;font-size:12.20px;font-weight:400;color:#141414;-webkit-text-stroke:0.34px #141414;">1/15/2024</div>
<div class="t" style="right:719.60px;top:383.30px;line-height:20px;font-size:11.80px;font-weight:400;color:#141414;-webkit-text-stroke:0.34px #141414;">$17.00</div>
<div class="t" style="right:627.60px;top:383.30px;line-height:20px;font-size:11.80px;font-weight:400;color:#141414;-webkit-text-stroke:0.34px #141414;">35</div>
<div class="t" style="right:537.60px;top:383.30px;line-height:20px;font-size:11.80px;font-weight:400;color:#141414;-webkit-text-stroke:0.34px #141414;">20.00%</div>
<div class="t" style="right:430.00px;top:383.30px;line-height:20px;font-size:11.80px;font-weight:400;color:#141414;-webkit-text-stroke:0.34px #141414;">$28.00</div>
<div class="t" style="right:321.60px;top:383.30px;line-height:20px;font-size:11.80px;font-weight:400;color:#141414;-webkit-text-stroke:0.34px #141414;">0</div>
<div class="t" style="right:231.80px;top:383.30px;line-height:20px;font-size:11.80px;font-weight:400;color:#141414;-webkit-text-stroke:0.34px #141414;">$119.00</div>
<div class="t" style="right:142.00px;top:383.30px;line-height:20px;font-size:11.80px;font-weight:400;color:#141414;-webkit-text-stroke:0.34px #141414;">$595.00</div>
<div class="t" style="right:52.80px;top:383.30px;line-height:20px;font-size:11.80px;font-weight:400;color:#141414;-webkit-text-stroke:0.34px #141414;">$476.00</div>
<div class="r" style="left:305.40px;top:403.40px;width:1208.00px;height:2.00px;background:#e7eaee"></div>
<div class="r" style="left:304.40px;top:379.00px;width:2.00px;height:25.40px;background:#e7eaee"></div>
<div class="r" style="left:348.00px;top:379.00px;width:2.00px;height:25.40px;background:#e7eaee"></div>
<div class="r" style="left:460.00px;top:379.00px;width:2.00px;height:25.40px;background:#e7eaee"></div>
<div class="r" style="left:556.20px;top:379.00px;width:2.00px;height:25.40px;background:#e7eaee"></div>
<div class="r" style="left:650.00px;top:379.00px;width:2.00px;height:25.40px;background:#e7eaee"></div>
<div class="r" style="left:754.00px;top:379.00px;width:2.00px;height:25.40px;background:#e7eaee"></div>
<div class="r" style="left:844.00px;top:379.00px;width:2.00px;height:25.40px;background:#e7eaee"></div>
<div class="r" style="left:936.00px;top:379.00px;width:2.00px;height:25.40px;background:#e7eaee"></div>
<div class="r" style="left:1026.00px;top:379.00px;width:2.00px;height:25.40px;background:#e7eaee"></div>
<div class="r" style="left:1133.60px;top:379.00px;width:2.00px;height:25.40px;background:#e7eaee"></div>
<div class="r" style="left:1242.00px;top:379.00px;width:2.00px;height:25.40px;background:#e7eaee"></div>
<div class="r" style="left:1331.80px;top:379.00px;width:2.00px;height:25.40px;background:#e7eaee"></div>
<div class="r" style="left:1421.60px;top:379.00px;width:2.00px;height:25.40px;background:#e7eaee"></div>
<div class="r" style="left:318.00px;top:408.20px;width:18.00px;height:16.80px;border:2px solid #555;border-radius:3px;box-sizing:border-box;background:#fff"></div>
<div class="t" style="left:354.00px;top:408.20px;line-height:20px;font-size:12.20px;font-weight:400;color:#141414;-webkit-text-stroke:0.34px #141414;text-decoration:underline;text-decoration-color:#666;text-underline-offset:1.4px;text-decoration-thickness:1px">Anita Benson</div>
<div class="t" style="left:467.60px;top:408.20px;line-height:20px;font-size:12.20px;font-weight:400;color:#141414;-webkit-text-stroke:0.34px #141414;">1/1/2024</div>
<div class="t" style="left:563.80px;top:408.20px;line-height:20px;font-size:12.20px;font-weight:400;color:#141414;-webkit-text-stroke:0.34px #141414;">1/15/2024</div>
<div class="t" style="left:657.60px;top:408.20px;line-height:20px;font-size:12.20px;font-weight:400;color:#141414;-webkit-text-stroke:0.34px #141414;">1/15/2024</div>
<div class="t" style="right:719.60px;top:408.20px;line-height:20px;font-size:11.80px;font-weight:400;color:#141414;-webkit-text-stroke:0.34px #141414;">$19.00</div>
<div class="t" style="right:627.60px;top:408.20px;line-height:20px;font-size:11.80px;font-weight:400;color:#141414;-webkit-text-stroke:0.34px #141414;">35</div>
<div class="t" style="right:537.60px;top:408.20px;line-height:20px;font-size:11.80px;font-weight:400;color:#141414;-webkit-text-stroke:0.34px #141414;">22.00%</div>
<div class="t" style="right:430.00px;top:408.20px;line-height:20px;font-size:11.80px;font-weight:400;color:#141414;-webkit-text-stroke:0.34px #141414;">$25.00</div>
<div class="t" style="right:321.60px;top:408.20px;line-height:20px;font-size:11.80px;font-weight:400;color:#141414;-webkit-text-stroke:0.34px #141414;">0</div>
<div class="t" style="right:231.80px;top:408.20px;line-height:20px;font-size:11.80px;font-weight:400;color:#141414;-webkit-text-stroke:0.34px #141414;">$146.30</div>
<div class="t" style="right:142.00px;top:408.20px;line-height:20px;font-size:11.80px;font-weight:400;color:#141414;-webkit-text-stroke:0.34px #141414;">$665.00</div>
<div class="t" style="right:52.80px;top:408.20px;line-height:20px;font-size:11.80px;font-weight:400;color:#141414;-webkit-text-stroke:0.34px #141414;">$518.70</div>
<div class="r" style="left:305.40px;top:427.80px;width:1208.00px;height:2.00px;background:#e7eaee"></div>
<div class="r" style="left:304.40px;top:404.40px;width:2.00px;height:24.40px;background:#e7eaee"></div>
<div class="r" style="left:348.00px;top:404.40px;width:2.00px;height:24.40px;background:#e7eaee"></div>
<div class="r" style="left:460.00px;top:404.40px;width:2.00px;height:24.40px;background:#e7eaee"></div>
<div class="r" style="left:556.20px;top:404.40px;width:2.00px;height:24.40px;background:#e7eaee"></div>
<div class="r" style="left:650.00px;top:404.40px;width:2.00px;height:24.40px;background:#e7eaee"></div>
<div class="r" style="left:754.00px;top:404.40px;width:2.00px;height:24.40px;background:#e7eaee"></div>
<div class="r" style="left:844.00px;top:404.40px;width:2.00px;height:24.40px;background:#e7eaee"></div>
<div class="r" style="left:936.00px;top:404.40px;width:2.00px;height:24.40px;background:#e7eaee"></div>
<div class="r" style="left:1026.00px;top:404.40px;width:2.00px;height:24.40px;background:#e7eaee"></div>
<div class="r" style="left:1133.60px;top:404.40px;width:2.00px;height:24.40px;background:#e7eaee"></div>
<div class="r" style="left:1242.00px;top:404.40px;width:2.00px;height:24.40px;background:#e7eaee"></div>
<div class="r" style="left:1331.80px;top:404.40px;width:2.00px;height:24.40px;background:#e7eaee"></div>
<div class="r" style="left:1421.60px;top:404.40px;width:2.00px;height:24.40px;background:#e7eaee"></div>
<div class="r" style="left:318.00px;top:432.90px;width:18.00px;height:16.80px;border:2px solid #555;border-radius:3px;box-sizing:border-box;background:#fff"></div>
<div class="t" style="left:354.00px;top:432.90px;line-height:20px;font-size:12.20px;font-weight:400;color:#141414;-webkit-text-stroke:0.34px #141414;text-decoration:underline;text-decoration-color:#666;text-underline-offset:1.4px;text-decoration-thickness:1px">Anita Boyd</div>
<div class="t" style="left:467.60px;top:432.90px;line-height:20px;font-size:12.20px;font-weight:400;color:#141414;-webkit-text-stroke:0.34px #141414;">1/1/2024</div>
<div class="t" style="left:563.80px;top:432.90px;line-height:20px;font-size:12.20px;font-weight:400;color:#141414;-webkit-text-stroke:0.34px #141414;">1/15/2024</div>
<div class="t" style="left:657.60px;top:432.90px;line-height:20px;font-size:12.20px;font-weight:400;color:#141414;-webkit-text-stroke:0.34px #141414;">1/15/2024</div>
<div class="t" style="right:719.60px;top:432.90px;line-height:20px;font-size:11.80px;font-weight:400;color:#141414;-webkit-text-stroke:0.34px #141414;">$15.00</div>
<div class="t" style="right:627.60px;top:432.90px;line-height:20px;font-size:11.80px;font-weight:400;color:#141414;-webkit-text-stroke:0.34px #141414;">35</div>
<div class="t" style="right:537.60px;top:432.90px;line-height:20px;font-size:11.80px;font-weight:400;color:#141414;-webkit-text-stroke:0.34px #141414;">20.00%</div>
<div class="t" style="right:430.00px;top:432.90px;line-height:20px;font-size:11.80px;font-weight:400;color:#141414;-webkit-text-stroke:0.34px #141414;">$29.00</div>
<div class="t" style="right:321.60px;top:432.90px;line-height:20px;font-size:11.80px;font-weight:400;color:#141414;-webkit-text-stroke:0.34px #141414;">0</div>
<div class="t" style="right:231.80px;top:432.90px;line-height:20px;font-size:11.80px;font-weight:400;color:#141414;-webkit-text-stroke:0.34px #141414;">$105.00</div>
<div class="t" style="right:142.00px;top:432.90px;line-height:20px;font-size:11.80px;font-weight:400;color:#141414;-webkit-text-stroke:0.34px #141414;">$525.00</div>
<div class="t" style="right:52.80px;top:432.90px;line-height:20px;font-size:11.80px;font-weight:400;color:#141414;-webkit-text-stroke:0.34px #141414;">$420.00</div>
<div class="r" style="left:305.40px;top:452.80px;width:1208.00px;height:2.00px;background:#e7eaee"></div>
<div class="r" style="left:304.40px;top:428.80px;width:2.00px;height:25.00px;background:#e7eaee"></div>
<div class="r" style="left:348.00px;top:428.80px;width:2.00px;height:25.00px;background:#e7eaee"></div>
<div class="r" style="left:460.00px;top:428.80px;width:2.00px;height:25.00px;background:#e7eaee"></div>
<div class="r" style="left:556.20px;top:428.80px;width:2.00px;height:25.00px;background:#e7eaee"></div>
<div class="r" style="left:650.00px;top:428.80px;width:2.00px;height:25.00px;background:#e7eaee"></div>
<div class="r" style="left:754.00px;top:428.80px;width:2.00px;height:25.00px;background:#e7eaee"></div>
<div class="r" style="left:844.00px;top:428.80px;width:2.00px;height:25.00px;background:#e7eaee"></div>
<div class="r" style="left:936.00px;top:428.80px;width:2.00px;height:25.00px;background:#e7eaee"></div>
<div class="r" style="left:1026.00px;top:428.80px;width:2.00px;height:25.00px;background:#e7eaee"></div>
<div class="r" style="left:1133.60px;top:428.80px;width:2.00px;height:25.00px;background:#e7eaee"></div>
<div class="r" style="left:1242.00px;top:428.80px;width:2.00px;height:25.00px;background:#e7eaee"></div>
<div class="r" style="left:1331.80px;top:428.80px;width:2.00px;height:25.00px;background:#e7eaee"></div>
<div class="r" style="left:1421.60px;top:428.80px;width:2.00px;height:25.00px;background:#e7eaee"></div>
<div class="r" style="left:318.00px;top:458.40px;width:18.00px;height:16.80px;border:2px solid #555;border-radius:3px;box-sizing:border-box;background:#fff"></div>
<div class="t" style="left:354.00px;top:458.40px;line-height:20px;font-size:12.20px;font-weight:400;color:#141414;-webkit-text-stroke:0.34px #141414;text-decoration:underline;text-decoration-color:#666;text-underline-offset:1.4px;text-decoration-thickness:1px">Carolyn Baker</div>
<div class="t" style="left:467.60px;top:458.40px;line-height:20px;font-size:12.20px;font-weight:400;color:#141414;-webkit-text-stroke:0.34px #141414;">1/1/2024</div>
<div class="t" style="left:563.80px;top:458.40px;line-height:20px;font-size:12.20px;font-weight:400;color:#141414;-webkit-text-stroke:0.34px #141414;">1/15/2024</div>
<div class="t" style="left:657.60px;top:458.40px;line-height:20px;font-size:12.20px;font-weight:400;color:#141414;-webkit-text-stroke:0.34px #141414;">1/15/2024</div>
<div class="t" style="right:719.60px;top:458.40px;line-height:20px;font-size:11.80px;font-weight:400;color:#141414;-webkit-text-stroke:0.34px #141414;">$18.00</div>
<div class="t" style="right:627.60px;top:458.40px;line-height:20px;font-size:11.80px;font-weight:400;color:#141414;-webkit-text-stroke:0.34px #141414;">40</div>
<div class="t" style="right:537.60px;top:458.40px;line-height:20px;font-size:11.80px;font-weight:400;color:#141414;-webkit-text-stroke:0.34px #141414;">22.00%</div>
<div class="t" style="right:430.00px;top:458.40px;line-height:20px;font-size:11.80px;font-weight:400;color:#141414;-webkit-text-stroke:0.34px #141414;">$24.00</div>
<div class="t" style="right:321.60px;top:458.40px;line-height:20px;font-size:11.80px;font-weight:400;color:#141414;-webkit-text-stroke:0.34px #141414;">0</div>
<div class="t" style="right:231.80px;top:458.40px;line-height:20px;font-size:11.80px;font-weight:400;color:#141414;-webkit-text-stroke:0.34px #141414;">$158.40</div>
<div class="t" style="right:142.00px;top:458.40px;line-height:20px;font-size:11.80px;font-weight:400;color:#141414;-webkit-text-stroke:0.34px #141414;">$720.00</div>
<div class="t" style="right:52.80px;top:458.40px;line-height:20px;font-size:11.80px;font-weight:400;color:#141414;-webkit-text-stroke:0.34px #141414;">$561.60</div>
<div class="r" style="left:305.40px;top:478.80px;width:1208.00px;height:2.00px;background:#e7eaee"></div>
<div class="r" style="left:304.40px;top:453.80px;width:2.00px;height:26.00px;background:#e7eaee"></div>
<div class="r" style="left:348.00px;top:453.80px;width:2.00px;height:26.00px;background:#e7eaee"></div>
<div class="r" style="left:460.00px;top:453.80px;width:2.00px;height:26.00px;background:#e7eaee"></div>
<div class="r" style="left:556.20px;top:453.80px;width:2.00px;height:26.00px;background:#e7eaee"></div>
<div class="r" style="left:650.00px;top:453.80px;width:2.00px;height:26.00px;background:#e7eaee"></div>
<div class="r" style="left:754.00px;top:453.80px;width:2.00px;height:26.00px;background:#e7eaee"></div>
<div class="r" style="left:844.00px;top:453.80px;width:2.00px;height:26.00px;background:#e7eaee"></div>
<div class="r" style="left:936.00px;top:453.80px;width:2.00px;height:26.00px;background:#e7eaee"></div>
<div class="r" style="left:1026.00px;top:453.80px;width:2.00px;height:26.00px;background:#e7eaee"></div>
<div class="r" style="left:1133.60px;top:453.80px;width:2.00px;height:26.00px;background:#e7eaee"></div>
<div class="r" style="left:1242.00px;top:453.80px;width:2.00px;height:26.00px;background:#e7eaee"></div>
<div class="r" style="left:1331.80px;top:453.80px;width:2.00px;height:26.00px;background:#e7eaee"></div>
<div class="r" style="left:1421.60px;top:453.80px;width:2.00px;height:26.00px;background:#e7eaee"></div>
<div class="r" style="left:318.00px;top:492.80px;width:18.00px;height:16.80px;border:2px solid #555;border-radius:3px;box-sizing:border-box;background:#fff"></div>
<div class="t" style="left:354.00px;top:484.60px;line-height:20px;font-size:12.20px;font-weight:400;color:#141414;-webkit-text-stroke:0.34px #141414;text-decoration:underline;text-decoration-color:#666;text-underline-offset:1.4px;text-decoration-thickness:1px">Chandler</div>
<div class="t" style="left:354.00px;top:501.40px;line-height:20px;font-size:12.20px;font-weight:400;color:#141414;-webkit-text-stroke:0.34px #141414;text-decoration:underline;text-decoration-color:#666;text-underline-offset:1.4px;text-decoration-thickness:1px">Bevington</div>
<div class="t" style="left:467.60px;top:492.80px;line-height:20px;font-size:12.20px;font-weight:400;color:#141414;-webkit-text-stroke:0.34px #141414;">1/1/2024</div>
<div class="t" style="left:563.80px;top:492.80px;line-height:20px;font-size:12.20px;font-weight:400;color:#141414;-webkit-text-stroke:0.34px #141414;">1/15/2024</div>
<div class="t" style="left:657.60px;top:492.80px;line-height:20px;font-size:12.20px;font-weight:400;color:#141414;-webkit-text-stroke:0.34px #141414;">1/15/2024</div>
<div class="t" style="right:719.60px;top:492.80px;line-height:20px;font-size:11.80px;font-weight:400;color:#141414;-webkit-text-stroke:0.34px #141414;">$17.00</div>
<div class="t" style="right:627.60px;top:492.80px;line-height:20px;font-size:11.80px;font-weight:400;color:#141414;-webkit-text-stroke:0.34px #141414;">40</div>
<div class="t" style="right:537.60px;top:492.80px;line-height:20px;font-size:11.80px;font-weight:400;color:#141414;-webkit-text-stroke:0.34px #141414;">30.00%</div>
<div class="t" style="right:430.00px;top:492.80px;line-height:20px;font-size:11.80px;font-weight:400;color:#141414;-webkit-text-stroke:0.34px #141414;">$26.00</div>
<div class="t" style="right:321.60px;top:492.80px;line-height:20px;font-size:11.80px;font-weight:400;color:#141414;-webkit-text-stroke:0.34px #141414;">0</div>
<div class="t" style="right:231.80px;top:492.80px;line-height:20px;font-size:11.80px;font-weight:400;color:#141414;-webkit-text-stroke:0.34px #141414;">$204.00</div>
<div class="t" style="right:142.00px;top:492.80px;line-height:20px;font-size:11.80px;font-weight:400;color:#141414;-webkit-text-stroke:0.34px #141414;">$680.00</div>
<div class="t" style="right:52.80px;top:492.80px;line-height:20px;font-size:11.80px;font-weight:400;color:#141414;-webkit-text-stroke:0.34px #141414;">$476.00</div>
<div class="r" style="left:305.40px;top:521.60px;width:1208.00px;height:2.00px;background:#e7eaee"></div>
<div class="r" style="left:304.40px;top:479.80px;width:2.00px;height:42.80px;background:#e7eaee"></div>
<div class="r" style="left:348.00px;top:479.80px;width:2.00px;height:42.80px;background:#e7eaee"></div>
<div class="r" style="left:460.00px;top:479.80px;width:2.00px;height:42.80px;background:#e7eaee"></div>
<div class="r" style="left:556.20px;top:479.80px;width:2.00px;height:42.80px;background:#e7eaee"></div>
<div class="r" style="left:650.00px;top:479.80px;width:2.00px;height:42.80px;background:#e7eaee"></div>
<div class="r" style="left:754.00px;top:479.80px;width:2.00px;height:42.80px;background:#e7eaee"></div>
<div class="r" style="left:844.00px;top:479.80px;width:2.00px;height:42.80px;background:#e7eaee"></div>
<div class="r" style="left:936.00px;top:479.80px;width:2.00px;height:42.80px;background:#e7eaee"></div>
<div class="r" style="left:1026.00px;top:479.80px;width:2.00px;height:42.80px;background:#e7eaee"></div>
<div class="r" style="left:1133.60px;top:479.80px;width:2.00px;height:42.80px;background:#e7eaee"></div>
<div class="r" style="left:1242.00px;top:479.80px;width:2.00px;height:42.80px;background:#e7eaee"></div>
<div class="r" style="left:1331.80px;top:479.80px;width:2.00px;height:42.80px;background:#e7eaee"></div>
<div class="r" style="left:1421.60px;top:479.80px;width:2.00px;height:42.80px;background:#e7eaee"></div>
<div class="r" style="left:318.00px;top:526.50px;width:18.00px;height:16.80px;border:2px solid #555;border-radius:3px;box-sizing:border-box;background:#fff"></div>
<div class="t" style="left:354.00px;top:526.50px;line-height:20px;font-size:12.20px;font-weight:400;color:#141414;-webkit-text-stroke:0.34px #141414;text-decoration:underline;text-decoration-color:#666;text-underline-offset:1.4px;text-decoration-thickness:1px">Donald Bradley</div>
<div class="t" style="left:467.60px;top:526.50px;line-height:20px;font-size:12.20px;font-weight:400;color:#141414;-webkit-text-stroke:0.34px #141414;">1/1/2024</div>
<div class="t" style="left:563.80px;top:526.50px;line-height:20px;font-size:12.20px;font-weight:400;color:#141414;-webkit-text-stroke:0.34px #141414;">1/15/2024</div>
<div class="t" style="left:657.60px;top:526.50px;line-height:20px;font-size:12.20px;font-weight:400;color:#141414;-webkit-text-stroke:0.34px #141414;">1/15/2024</div>
<div class="t" style="right:719.60px;top:526.50px;line-height:20px;font-size:11.80px;font-weight:400;color:#141414;-webkit-text-stroke:0.34px #141414;">$16.00</div>
<div class="t" style="right:627.60px;top:526.50px;line-height:20px;font-size:11.80px;font-weight:400;color:#141414;-webkit-text-stroke:0.34px #141414;">40</div>
<div class="t" style="right:537.60px;top:526.50px;line-height:20px;font-size:11.80px;font-weight:400;color:#141414;-webkit-text-stroke:0.34px #141414;">22.00%</div>
<div class="t" style="right:430.00px;top:526.50px;line-height:20px;font-size:11.80px;font-weight:400;color:#141414;-webkit-text-stroke:0.34px #141414;">$20.00</div>
<div class="t" style="right:321.60px;top:526.50px;line-height:20px;font-size:11.80px;font-weight:400;color:#141414;-webkit-text-stroke:0.34px #141414;">0</div>
<div class="t" style="right:231.80px;top:526.50px;line-height:20px;font-size:11.80px;font-weight:400;color:#141414;-webkit-text-stroke:0.34px #141414;">$140.80</div>
<div class="t" style="right:142.00px;top:526.50px;line-height:20px;font-size:11.80px;font-weight:400;color:#141414;-webkit-text-stroke:0.34px #141414;">$640.00</div>
<div class="t" style="right:52.80px;top:526.50px;line-height:20px;font-size:11.80px;font-weight:400;color:#141414;-webkit-text-stroke:0.34px #141414;">$499.20</div>
<div class="r" style="left:305.40px;top:546.20px;width:1208.00px;height:2.00px;background:#e7eaee"></div>
<div class="r" style="left:304.40px;top:522.60px;width:2.00px;height:24.60px;background:#e7eaee"></div>
<div class="r" style="left:348.00px;top:522.60px;width:2.00px;height:24.60px;background:#e7eaee"></div>
<div class="r" style="left:460.00px;top:522.60px;width:2.00px;height:24.60px;background:#e7eaee"></div>
<div class="r" style="left:556.20px;top:522.60px;width:2.00px;height:24.60px;background:#e7eaee"></div>
<div class="r" style="left:650.00px;top:522.60px;width:2.00px;height:24.60px;background:#e7eaee"></div>
<div class="r" style="left:754.00px;top:522.60px;width:2.00px;height:24.60px;background:#e7eaee"></div>
<div class="r" style="left:844.00px;top:522.60px;width:2.00px;height:24.60px;background:#e7eaee"></div>
<div class="r" style="left:936.00px;top:522.60px;width:2.00px;height:24.60px;background:#e7eaee"></div>
<div class="r" style="left:1026.00px;top:522.60px;width:2.00px;height:24.60px;background:#e7eaee"></div>
<div class="r" style="left:1133.60px;top:522.60px;width:2.00px;height:24.60px;background:#e7eaee"></div>
<div class="r" style="left:1242.00px;top:522.60px;width:2.00px;height:24.60px;background:#e7eaee"></div>
<div class="r" style="left:1331.80px;top:522.60px;width:2.00px;height:24.60px;background:#e7eaee"></div>
<div class="r" style="left:1421.60px;top:522.60px;width:2.00px;height:24.60px;background:#e7eaee"></div>
<div class="r" style="left:318.00px;top:551.50px;width:18.00px;height:16.80px;border:2px solid #555;border-radius:3px;box-sizing:border-box;background:#fff"></div>
<div class="t" style="left:354.00px;top:551.50px;line-height:20px;font-size:12.20px;font-weight:400;color:#141414;-webkit-text-stroke:0.34px #141414;text-decoration:underline;text-decoration-color:#666;text-underline-offset:1.4px;text-decoration-thickness:1px">Francine Bing</div>
<div class="t" style="left:467.60px;top:551.50px;line-height:20px;font-size:12.20px;font-weight:400;color:#141414;-webkit-text-stroke:0.34px #141414;">1/1/2024</div>
<div class="t" style="left:563.80px;top:551.50px;line-height:20px;font-size:12.20px;font-weight:400;color:#141414;-webkit-text-stroke:0.34px #141414;">1/15/2024</div>
<div class="t" style="left:657.60px;top:551.50px;line-height:20px;font-size:12.20px;font-weight:400;color:#141414;-webkit-text-stroke:0.34px #141414;">1/15/2024</div>
<div class="t" style="right:719.60px;top:551.50px;line-height:20px;font-size:11.80px;font-weight:400;color:#141414;-webkit-text-stroke:0.34px #141414;">$18.00</div>
<div class="t" style="right:627.60px;top:551.50px;line-height:20px;font-size:11.80px;font-weight:400;color:#141414;-webkit-text-stroke:0.34px #141414;">35</div>
<div class="t" style="right:537.60px;top:551.50px;line-height:20px;font-size:11.80px;font-weight:400;color:#141414;-webkit-text-stroke:0.34px #141414;">20.00%</div>
<div class="t" style="right:430.00px;top:551.50px;line-height:20px;font-size:11.80px;font-weight:400;color:#141414;-webkit-text-stroke:0.34px #141414;">$28.00</div>
<div class="t" style="right:321.60px;top:551.50px;line-height:20px;font-size:11.80px;font-weight:400;color:#141414;-webkit-text-stroke:0.34px #141414;">0</div>
<div class="t" style="right:231.80px;top:551.50px;line-height:20px;font-size:11.80px;font-weight:400;color:#141414;-webkit-text-stroke:0.34px #141414;">$126.00</div>
<div class="t" style="right:142.00px;top:551.50px;line-height:20px;font-size:11.80px;font-weight:400;color:#141414;-webkit-text-stroke:0.34px #141414;">$630.00</div>
<div class="t" style="right:52.80px;top:551.50px;line-height:20px;font-size:11.80px;font-weight:400;color:#141414;-webkit-text-stroke:0.34px #141414;">$504.00</div>
<div class="r" style="left:305.40px;top:571.60px;width:1208.00px;height:2.00px;background:#e7eaee"></div>
<div class="r" style="left:304.40px;top:547.20px;width:2.00px;height:25.40px;background:#e7eaee"></div>
<div class="r" style="left:348.00px;top:547.20px;width:2.00px;height:25.40px;background:#e7eaee"></div>
<div class="r" style="left:460.00px;top:547.20px;width:2.00px;height:25.40px;background:#e7eaee"></div>
<div class="r" style="left:556.20px;top:547.20px;width:2.00px;height:25.40px;background:#e7eaee"></div>
<div class="r" style="left:650.00px;top:547.20px;width:2.00px;height:25.40px;background:#e7eaee"></div>
<div class="r" style="left:754.00px;top:547.20px;width:2.00px;height:25.40px;background:#e7eaee"></div>
<div class="r" style="left:844.00px;top:547.20px;width:2.00px;height:25.40px;background:#e7eaee"></div>
<div class="r" style="left:936.00px;top:547.20px;width:2.00px;height:25.40px;background:#e7eaee"></div>
<div class="r" style="left:1026.00px;top:547.20px;width:2.00px;height:25.40px;background:#e7eaee"></div>
<div class="r" style="left:1133.60px;top:547.20px;width:2.00px;height:25.40px;background:#e7eaee"></div>
<div class="r" style="left:1242.00px;top:547.20px;width:2.00px;height:25.40px;background:#e7eaee"></div>
<div class="r" style="left:1331.80px;top:547.20px;width:2.00px;height:25.40px;background:#e7eaee"></div>
<div class="r" style="left:1421.60px;top:547.20px;width:2.00px;height:25.40px;background:#e7eaee"></div>
<div class="r" style="left:318.00px;top:576.30px;width:18.00px;height:16.80px;border:2px solid #555;border-radius:3px;box-sizing:border-box;background:#fff"></div>
<div class="t" style="left:354.00px;top:576.30px;line-height:20px;font-size:12.20px;font-weight:400;color:#141414;-webkit-text-stroke:0.34px #141414;text-decoration:underline;text-decoration-color:#666;text-underline-offset:1.4px;text-decoration-thickness:1px">Hewitt Aiello</div>
<div class="t" style="left:467.60px;top:576.30px;line-height:20px;font-size:12.20px;font-weight:400;color:#141414;-webkit-text-stroke:0.34px #141414;">1/1/2024</div>
<div class="t" style="left:563.80px;top:576.30px;line-height:20px;font-size:12.20px;font-weight:400;color:#141414;-webkit-text-stroke:0.34px #141414;">1/15/2024</div>
<div class="t" style="left:657.60px;top:576.30px;line-height:20px;font-size:12.20px;font-weight:400;color:#141414;-webkit-text-stroke:0.34px #141414;">1/15/2024</div>
<div class="t" style="right:719.60px;top:576.30px;line-height:20px;font-size:11.80px;font-weight:400;color:#141414;-webkit-text-stroke:0.34px #141414;">$17.00</div>
<div class="t" style="right:627.60px;top:576.30px;line-height:20px;font-size:11.80px;font-weight:400;color:#141414;-webkit-text-stroke:0.34px #141414;">40</div>
<div class="t" style="right:537.60px;top:576.30px;line-height:20px;font-size:11.80px;font-weight:400;color:#141414;-webkit-text-stroke:0.34px #141414;">22.00%</div>
<div class="t" style="right:430.00px;top:576.30px;line-height:20px;font-size:11.80px;font-weight:400;color:#141414;-webkit-text-stroke:0.34px #141414;">$22.00</div>
<div class="t" style="right:321.60px;top:576.30px;line-height:20px;font-size:11.80px;font-weight:400;color:#141414;-webkit-text-stroke:0.34px #141414;">3</div>
<div class="t" style="right:231.80px;top:576.30px;line-height:20px;font-size:11.80px;font-weight:400;color:#141414;-webkit-text-stroke:0.34px #141414;">$164.12</div>
<div class="t" style="right:142.00px;top:576.30px;line-height:20px;font-size:11.80px;font-weight:400;color:#141414;-webkit-text-stroke:0.34px #141414;">$746.00</div>
<div class="t" style="right:52.80px;top:576.30px;line-height:20px;font-size:11.80px;font-weight:400;color:#141414;-webkit-text-stroke:0.34px #141414;">$581.88</div>
<div class="r" style="left:305.40px;top:595.80px;width:1208.00px;height:2.00px;background:#e7eaee"></div>
<div class="r" style="left:304.40px;top:572.60px;width:2.00px;height:24.20px;background:#e7eaee"></div>
<div class="r" style="left:348.00px;top:572.60px;width:2.00px;height:24.20px;background:#e7eaee"></div>
<div class="r" style="left:460.00px;top:572.60px;width:2.00px;height:24.20px;background:#e7eaee"></div>
<div class="r" style="left:556.20px;top:572.60px;width:2.00px;height:24.20px;background:#e7eaee"></div>
<div class="r" style="left:650.00px;top:572.60px;width:2.00px;height:24.20px;background:#e7eaee"></div>
<div class="r" style="left:754.00px;top:572.60px;width:2.00px;height:24.20px;background:#e7eaee"></div>
<div class="r" style="left:844.00px;top:572.60px;width:2.00px;height:24.20px;background:#e7eaee"></div>
<div class="r" style="left:936.00px;top:572.60px;width:2.00px;height:24.20px;background:#e7eaee"></div>
<div class="r" style="left:1026.00px;top:572.60px;width:2.00px;height:24.20px;background:#e7eaee"></div>
<div class="r" style="left:1133.60px;top:572.60px;width:2.00px;height:24.20px;background:#e7eaee"></div>
<div class="r" style="left:1242.00px;top:572.60px;width:2.00px;height:24.20px;background:#e7eaee"></div>
<div class="r" style="left:1331.80px;top:572.60px;width:2.00px;height:24.20px;background:#e7eaee"></div>
<div class="r" style="left:1421.60px;top:572.60px;width:2.00px;height:24.20px;background:#e7eaee"></div>
<div class="r" style="left:278.60px;top:595.80px;width:1234.80px;height:2.00px;background:#e7eaee"></div>
<svg class="r" style="left:286.60px;top:606.60px;width:12.80px;height:8.40px" viewBox="0 0 6.4 4.2"><path d="M0.6 0.6L3.2 3.4 5.8 0.6" fill="none" stroke="#2a2a2a" stroke-width="1"/></svg>
<div class="t" style="left:309.60px;top:600.80px;line-height:20px;font-size:11.70px;font-weight:400;color:#141414;-webkit-text-stroke:0.34px #141414;">Pay Period: 2 (Count: 10)</div>
<div class="r" style="left:305.40px;top:621.80px;width:1208.00px;height:2.00px;background:#e7eaee"></div>
<div class="r" style="left:318.00px;top:626.80px;width:18.00px;height:16.80px;border:2px solid #555;border-radius:3px;box-sizing:border-box;background:#fff"></div>
<div class="t" style="left:354.00px;top:626.80px;line-height:20px;font-size:12.20px;font-weight:400;color:#141414;-webkit-text-stroke:0.34px #141414;text-decoration:underline;text-decoration-color:#666;text-underline-offset:1.4px;text-decoration-thickness:1px">Aaron Bormann</div>
<div class="t" style="left:467.60px;top:626.80px;line-height:20px;font-size:12.20px;font-weight:400;color:#141414;-webkit-text-stroke:0.34px #141414;">1/16/2024</div>
<div class="t" style="left:563.80px;top:626.80px;line-height:20px;font-size:12.20px;font-weight:400;color:#141414;-webkit-text-stroke:0.34px #141414;">1/31/2024</div>
<div class="t" style="left:657.60px;top:626.80px;line-height:20px;font-size:12.20px;font-weight:400;color:#141414;-webkit-text-stroke:0.34px #141414;">1/31/2024</div>
<div class="t" style="right:719.60px;top:626.80px;line-height:20px;font-size:11.80px;font-weight:400;color:#141414;-webkit-text-stroke:0.34px #141414;">$18.00</div>
<div class="t" style="right:627.60px;top:626.80px;line-height:20px;font-size:11.80px;font-weight:400;color:#141414;-webkit-text-stroke:0.34px #141414;">39</div>
<div class="t" style="right:537.60px;top:626.80px;line-height:20px;font-size:11.80px;font-weight:400;color:#141414;-webkit-text-stroke:0.34px #141414;">20.00%</div>
<div class="t" style="right:430.00px;top:626.80px;line-height:20px;font-size:11.80px;font-weight:400;color:#141414;-webkit-text-stroke:0.34px #141414;">$28.00</div>
<div class="t" style="right:321.60px;top:626.80px;line-height:20px;font-size:11.80px;font-weight:400;color:#141414;-webkit-text-stroke:0.34px #141414;">0</div>
<div class="t" style="right:231.80px;top:626.80px;line-height:20px;font-size:11.80px;font-weight:400;color:#141414;-webkit-text-stroke:0.34px #141414;">$140.40</div>
<div class="t" style="right:142.00px;top:626.80px;line-height:20px;font-size:11.80px;font-weight:400;color:#141414;-webkit-text-stroke:0.34px #141414;">$702.00</div>
<div class="t" style="right:52.80px;top:626.80px;line-height:20px;font-size:11.80px;font-weight:400;color:#141414;-webkit-text-stroke:0.34px #141414;">$561.60</div>
<div class="r" style="left:305.40px;top:646.60px;width:1208.00px;height:2.00px;background:#e7eaee"></div>
<div class="r" style="left:304.40px;top:622.80px;width:2.00px;height:24.80px;background:#e7eaee"></div>
<div class="r" style="left:348.00px;top:622.80px;width:2.00px;height:24.80px;background:#e7eaee"></div>
<div class="r" style="left:460.00px;top:622.80px;width:2.00px;height:24.80px;background:#e7eaee"></div>
<div class="r" style="left:556.20px;top:622.80px;width:2.00px;height:24.80px;background:#e7eaee"></div>
<div class="r" style="left:650.00px;top:622.80px;width:2.00px;height:24.80px;background:#e7eaee"></div>
<div class="r" style="left:754.00px;top:622.80px;width:2.00px;height:24.80px;background:#e7eaee"></div>
<div class="r" style="left:844.00px;top:622.80px;width:2.00px;height:24.80px;background:#e7eaee"></div>
<div class="r" style="left:936.00px;top:622.80px;width:2.00px;height:24.80px;background:#e7eaee"></div>
<div class="r" style="left:1026.00px;top:622.80px;width:2.00px;height:24.80px;background:#e7eaee"></div>
<div class="r" style="left:1133.60px;top:622.80px;width:2.00px;height:24.80px;background:#e7eaee"></div>
<div class="r" style="left:1242.00px;top:622.80px;width:2.00px;height:24.80px;background:#e7eaee"></div>
<div class="r" style="left:1331.80px;top:622.80px;width:2.00px;height:24.80px;background:#e7eaee"></div>
<div class="r" style="left:1421.60px;top:622.80px;width:2.00px;height:24.80px;background:#e7eaee"></div>
<div class="r" style="left:318.00px;top:651.70px;width:18.00px;height:16.80px;border:2px solid #555;border-radius:3px;box-sizing:border-box;background:#fff"></div>
<div class="t" style="left:354.00px;top:651.70px;line-height:20px;font-size:12.20px;font-weight:400;color:#141414;-webkit-text-stroke:0.34px #141414;text-decoration:underline;text-decoration-color:#666;text-underline-offset:1.4px;text-decoration-thickness:1px">Alberta Berntsen</div>
<div class="t" style="left:467.60px;top:651.70px;line-height:20px;font-size:12.20px;font-weight:400;color:#141414;-webkit-text-stroke:0.34px #141414;">1/16/2024</div>
<div class="t" style="left:563.80px;top:651.70px;line-height:20px;font-size:12.20px;font-weight:400;color:#141414;-webkit-text-stroke:0.34px #141414;">1/31/2024</div>
<div class="t" style="left:657.60px;top:651.70px;line-height:20px;font-size:12.20px;font-weight:400;color:#141414;-webkit-text-stroke:0.34px #141414;">1/31/2024</div>
<div class="t" style="right:719.60px;top:651.70px;line-height:20px;font-size:11.80px;font-weight:400;color:#141414;-webkit-text-stroke:0.34px #141414;">$18.00</div>
<div class="t" style="right:627.60px;top:651.70px;line-height:20px;font-size:11.80px;font-weight:400;color:#141414;-webkit-text-stroke:0.34px #141414;">40</div>
<div class="t" style="right:537.60px;top:651.70px;line-height:20px;font-size:11.80px;font-weight:400;color:#141414;-webkit-text-stroke:0.34px #141414;">30.00%</div>
<div class="t" style="right:430.00px;top:651.70px;line-height:20px;font-size:11.80px;font-weight:400;color:#141414;-webkit-text-stroke:0.34px #141414;">$29.00</div>
<div class="t" style="right:321.60px;top:651.70px;line-height:20px;font-size:11.80px;font-weight:400;color:#141414;-webkit-text-stroke:0.34px #141414;">6</div>
<div class="t" style="right:231.80px;top:651.70px;line-height:20px;font-size:11.80px;font-weight:400;color:#141414;-webkit-text-stroke:0.34px #141414;">$268.20</div>
<div class="t" style="right:142.00px;top:651.70px;line-height:20px;font-size:11.80px;font-weight:400;color:#141414;-webkit-text-stroke:0.34px #141414;">$894.00</div>
<div class="t" style="right:52.80px;top:651.70px;line-height:20px;font-size:11.80px;font-weight:400;color:#141414;-webkit-text-stroke:0.34px #141414;">$625.80</div>
<div class="r" style="left:305.40px;top:671.60px;width:1208.00px;height:2.00px;background:#e7eaee"></div>
<div class="r" style="left:304.40px;top:647.60px;width:2.00px;height:25.00px;background:#e7eaee"></div>
<div class="r" style="left:348.00px;top:647.60px;width:2.00px;height:25.00px;background:#e7eaee"></div>
<div class="r" style="left:460.00px;top:647.60px;width:2.00px;height:25.00px;background:#e7eaee"></div>
<div class="r" style="left:556.20px;top:647.60px;width:2.00px;height:25.00px;background:#e7eaee"></div>
<div class="r" style="left:650.00px;top:647.60px;width:2.00px;height:25.00px;background:#e7eaee"></div>
<div class="r" style="left:754.00px;top:647.60px;width:2.00px;height:25.00px;background:#e7eaee"></div>
<div class="r" style="left:844.00px;top:647.60px;width:2.00px;height:25.00px;background:#e7eaee"></div>
<div class="r" style="left:936.00px;top:647.60px;width:2.00px;height:25.00px;background:#e7eaee"></div>
<div class="r" style="left:1026.00px;top:647.60px;width:2.00px;height:25.00px;background:#e7eaee"></div>
<div class="r" style="left:1133.60px;top:647.60px;width:2.00px;height:25.00px;background:#e7eaee"></div>
<div class="r" style="left:1242.00px;top:647.60px;width:2.00px;height:25.00px;background:#e7eaee"></div>
<div class="r" style="left:1331.80px;top:647.60px;width:2.00px;height:25.00px;background:#e7eaee"></div>
<div class="r" style="left:1421.60px;top:647.60px;width:2.00px;height:25.00px;background:#e7eaee"></div>
<div class="r" style="left:318.00px;top:677.10px;width:18.00px;height:16.80px;border:2px solid #555;border-radius:3px;box-sizing:border-box;background:#fff"></div>
<div class="t" style="left:354.00px;top:677.10px;line-height:20px;font-size:12.20px;font-weight:400;color:#141414;-webkit-text-stroke:0.34px #141414;text-decoration:underline;text-decoration-color:#666;text-underline-offset:1.4px;text-decoration-thickness:1px">Almas Basinger</div>
<div class="t" style="left:467.60px;top:677.10px;line-height:20px;font-size:12.20px;font-weight:400;color:#141414;-webkit-text-stroke:0.34px #141414;">1/16/2024</div>
<div class="t" style="left:563.80px;top:677.10px;line-height:20px;font-size:12.20px;font-weight:400;color:#141414;-webkit-text-stroke:0.34px #141414;">1/31/2024</div>
<div class="t" style="left:657.60px;top:677.10px;line-height:20px;font-size:12.20px;font-weight:400;color:#141414;-webkit-text-stroke:0.34px #141414;">1/31/2024</div>
<div class="t" style="right:719.60px;top:677.10px;line-height:20px;font-size:11.80px;font-weight:400;color:#141414;-webkit-text-stroke:0.34px #141414;">$17.00</div>
<div class="t" style="right:627.60px;top:677.10px;line-height:20px;font-size:11.80px;font-weight:400;color:#141414;-webkit-text-stroke:0.34px #141414;">35</div>
<div class="t" style="right:537.60px;top:677.10px;line-height:20px;font-size:11.80px;font-weight:400;color:#141414;-webkit-text-stroke:0.34px #141414;">20.00%</div>
<div class="t" style="right:430.00px;top:677.10px;line-height:20px;font-size:11.80px;font-weight:400;color:#141414;-webkit-text-stroke:0.34px #141414;">$28.00</div>
<div class="t" style="right:321.60px;top:677.10px;line-height:20px;font-size:11.80px;font-weight:400;color:#141414;-webkit-text-stroke:0.34px #141414;">6</div>
<div class="t" style="right:231.80px;top:677.10px;line-height:20px;font-size:11.80px;font-weight:400;color:#141414;-webkit-text-stroke:0.34px #141414;">$152.60</div>
<div class="t" style="right:142.00px;top:677.10px;line-height:20px;font-size:11.80px;font-weight:400;color:#141414;-webkit-text-stroke:0.34px #141414;">$763.00</div>
<div class="t" style="right:52.80px;top:677.10px;line-height:20px;font-size:11.80px;font-weight:400;color:#141414;-webkit-text-stroke:0.34px #141414;">$610.40</div>
<div class="r" style="left:305.40px;top:697.40px;width:1208.00px;height:2.00px;background:#e7eaee"></div>
<div class="r" style="left:304.40px;top:672.60px;width:2.00px;height:25.80px;background:#e7eaee"></div>
<div class="r" style="left:348.00px;top:672.60px;width:2.00px;height:25.80px;background:#e7eaee"></div>
<div class="r" style="left:460.00px;top:672.60px;width:2.00px;height:25.80px;background:#e7eaee"></div>
<div class="r" style="left:556.20px;top:672.60px;width:2.00px;height:25.80px;background:#e7eaee"></div>
<div class="r" style="left:650.00px;top:672.60px;width:2.00px;height:25.80px;background:#e7eaee"></div>
<div class="r" style="left:754.00px;top:672.60px;width:2.00px;height:25.80px;background:#e7eaee"></div>
<div class="r" style="left:844.00px;top:672.60px;width:2.00px;height:25.80px;background:#e7eaee"></div>
<div class="r" style="left:936.00px;top:672.60px;width:2.00px;height:25.80px;background:#e7eaee"></div>
<div class="r" style="left:1026.00px;top:672.60px;width:2.00px;height:25.80px;background:#e7eaee"></div>
<div class="r" style="left:1133.60px;top:672.60px;width:2.00px;height:25.80px;background:#e7eaee"></div>
<div class="r" style="left:1242.00px;top:672.60px;width:2.00px;height:25.80px;background:#e7eaee"></div>
<div class="r" style="left:1331.80px;top:672.60px;width:2.00px;height:25.80px;background:#e7eaee"></div>
<div class="r" style="left:1421.60px;top:672.60px;width:2.00px;height:25.80px;background:#e7eaee"></div>
<div class="r" style="left:318.00px;top:702.40px;width:18.00px;height:16.80px;border:2px solid #555;border-radius:3px;box-sizing:border-box;background:#fff"></div>
<div class="t" style="left:354.00px;top:702.40px;line-height:20px;font-size:12.20px;font-weight:400;color:#141414;-webkit-text-stroke:0.34px #141414;text-decoration:underline;text-decoration-color:#666;text-underline-offset:1.4px;text-decoration-thickness:1px">Anita Benson</div>
<div class="t" style="left:467.60px;top:702.40px;line-height:20px;font-size:12.20px;font-weight:400;color:#141414;-webkit-text-stroke:0.34px #141414;">1/16/2024</div>
<div class="t" style="left:563.80px;top:702.40px;line-height:20px;font-size:12.20px;font-weight:400;color:#141414;-webkit-text-stroke:0.34px #141414;">1/31/2024</div>
<div class="t" style="left:657.60px;top:702.40px;line-height:20px;font-size:12.20px;font-weight:400;color:#141414;-webkit-text-stroke:0.34px #141414;">1/31/2024</div>
<div class="t" style="right:719.60px;top:702.40px;line-height:20px;font-size:11.80px;font-weight:400;color:#141414;-webkit-text-stroke:0.34px #141414;">$19.00</div>
<div class="t" style="right:627.60px;top:702.40px;line-height:20px;font-size:11.80px;font-weight:400;color:#141414;-webkit-text-stroke:0.34px #141414;">35</div>
<div class="t" style="right:537.60px;top:702.40px;line-height:20px;font-size:11.80px;font-weight:400;color:#141414;-webkit-text-stroke:0.34px #141414;">22.00%</div>
<div class="t" style="right:430.00px;top:702.40px;line-height:20px;font-size:11.80px;font-weight:400;color:#141414;-webkit-text-stroke:0.34px #141414;">$25.00</div>
<div class="t" style="right:321.60px;top:702.40px;line-height:20px;font-size:11.80px;font-weight:400;color:#141414;-webkit-text-stroke:0.34px #141414;">0</div>
<div class="t" style="right:231.80px;top:702.40px;line-height:20px;font-size:11.80px;font-weight:400;color:#141414;-webkit-text-stroke:0.34px #141414;">$146.30</div>
<div class="t" style="right:142.00px;top:702.40px;line-height:20px;font-size:11.80px;font-weight:400;color:#141414;-webkit-text-stroke:0.34px #141414;">$665.00</div>
<div class="t" style="right:52.80px;top:702.40px;line-height:20px;font-size:11.80px;font-weight:400;color:#141414;-webkit-text-stroke:0.34px #141414;">$518.70</div>
<div class="r" style="left:305.40px;top:722.20px;width:1208.00px;height:2.00px;background:#e7eaee"></div>
<div class="r" style="left:304.40px;top:698.40px;width:2.00px;height:24.80px;background:#e7eaee"></div>
<div class="r" style="left:348.00px;top:698.40px;width:2.00px;height:24.80px;background:#e7eaee"></div>
<div class="r" style="left:460.00px;top:698.40px;width:2.00px;height:24.80px;background:#e7eaee"></div>
<div class="r" style="left:556.20px;top:698.40px;width:2.00px;height:24.80px;background:#e7eaee"></div>
<div class="r" style="left:650.00px;top:698.40px;width:2.00px;height:24.80px;background:#e7eaee"></div>
<div class="r" style="left:754.00px;top:698.40px;width:2.00px;height:24.80px;background:#e7eaee"></div>
<div class="r" style="left:844.00px;top:698.40px;width:2.00px;height:24.80px;background:#e7eaee"></div>
<div class="r" style="left:936.00px;top:698.40px;width:2.00px;height:24.80px;background:#e7eaee"></div>
<div class="r" style="left:1026.00px;top:698.40px;width:2.00px;height:24.80px;background:#e7eaee"></div>
<div class="r" style="left:1133.60px;top:698.40px;width:2.00px;height:24.80px;background:#e7eaee"></div>
<div class="r" style="left:1242.00px;top:698.40px;width:2.00px;height:24.80px;background:#e7eaee"></div>
<div class="r" style="left:1331.80px;top:698.40px;width:2.00px;height:24.80px;background:#e7eaee"></div>
<div class="r" style="left:1421.60px;top:698.40px;width:2.00px;height:24.80px;background:#e7eaee"></div>
<div class="r" style="left:318.00px;top:727.20px;width:18.00px;height:16.80px;border:2px solid #555;border-radius:3px;box-sizing:border-box;background:#fff"></div>
<div class="t" style="left:354.00px;top:727.20px;line-height:20px;font-size:12.20px;font-weight:400;color:#141414;-webkit-text-stroke:0.34px #141414;text-decoration:underline;text-decoration-color:#666;text-underline-offset:1.4px;text-decoration-thickness:1px">Anita Boyd</div>
<div class="t" style="left:467.60px;top:727.20px;line-height:20px;font-size:12.20px;font-weight:400;color:#141414;-webkit-text-stroke:0.34px #141414;">1/16/2024</div>
<div class="t" style="left:563.80px;top:727.20px;line-height:20px;font-size:12.20px;font-weight:400;color:#141414;-webkit-text-stroke:0.34px #141414;">1/31/2024</div>
<div class="t" style="left:657.60px;top:727.20px;line-height:20px;font-size:12.20px;font-weight:400;color:#141414;-webkit-text-stroke:0.34px #141414;">1/31/2024</div>
<div class="t" style="right:719.60px;top:727.20px;line-height:20px;font-size:11.80px;font-weight:400;color:#141414;-webkit-text-stroke:0.34px #141414;">$15.00</div>
<div class="t" style="right:627.60px;top:727.20px;line-height:20px;font-size:11.80px;font-weight:400;color:#141414;-webkit-text-stroke:0.34px #141414;">34</div>
<div class="t" style="right:537.60px;top:727.20px;line-height:20px;font-size:11.80px;font-weight:400;color:#141414;-webkit-text-stroke:0.34px #141414;">20.00%</div>
<div class="t" style="right:430.00px;top:727.20px;line-height:20px;font-size:11.80px;font-weight:400;color:#141414;-webkit-text-stroke:0.34px #141414;">$29.00</div>
<div class="t" style="right:321.60px;top:727.20px;line-height:20px;font-size:11.80px;font-weight:400;color:#141414;-webkit-text-stroke:0.34px #141414;">4</div>
<div class="t" style="right:231.80px;top:727.20px;line-height:20px;font-size:11.80px;font-weight:400;color:#141414;-webkit-text-stroke:0.34px #141414;">$125.20</div>
<div class="t" style="right:142.00px;top:727.20px;line-height:20px;font-size:11.80px;font-weight:400;color:#141414;-webkit-text-stroke:0.34px #141414;">$626.00</div>
<div class="t" style="right:52.80px;top:727.20px;line-height:20px;font-size:11.80px;font-weight:400;color:#141414;-webkit-text-stroke:0.34px #141414;">$500.80</div>
<div class="r" style="left:305.40px;top:747.00px;width:1208.00px;height:2.00px;background:#e7eaee"></div>
<div class="r" style="left:304.40px;top:723.20px;width:2.00px;height:24.80px;background:#e7eaee"></div>
<div class="r" style="left:348.00px;top:723.20px;width:2.00px;height:24.80px;background:#e7eaee"></div>
<div class="r" style="left:460.00px;top:723.20px;width:2.00px;height:24.80px;background:#e7eaee"></div>
<div class="r" style="left:556.20px;top:723.20px;width:2.00px;height:24.80px;background:#e7eaee"></div>
<div class="r" style="left:650.00px;top:723.20px;width:2.00px;height:24.80px;background:#e7eaee"></div>
<div class="r" style="left:754.00px;top:723.20px;width:2.00px;height:24.80px;background:#e7eaee"></div>
<div class="r" style="left:844.00px;top:723.20px;width:2.00px;height:24.80px;background:#e7eaee"></div>
<div class="r" style="left:936.00px;top:723.20px;width:2.00px;height:24.80px;background:#e7eaee"></div>
<div class="r" style="left:1026.00px;top:723.20px;width:2.00px;height:24.80px;background:#e7eaee"></div>
<div class="r" style="left:1133.60px;top:723.20px;width:2.00px;height:24.80px;background:#e7eaee"></div>
<div class="r" style="left:1242.00px;top:723.20px;width:2.00px;height:24.80px;background:#e7eaee"></div>
<div class="r" style="left:1331.80px;top:723.20px;width:2.00px;height:24.80px;background:#e7eaee"></div>
<div class="r" style="left:1421.60px;top:723.20px;width:2.00px;height:24.80px;background:#e7eaee"></div>
<div class="r" style="left:318.00px;top:751.60px;width:18.00px;height:16.80px;border:2px solid #555;border-radius:3px;box-sizing:border-box;background:#fff"></div>
<div class="t" style="left:354.00px;top:751.60px;line-height:20px;font-size:12.20px;font-weight:400;color:#141414;-webkit-text-stroke:0.34px #141414;text-decoration:underline;text-decoration-color:#666;text-underline-offset:1.4px;text-decoration-thickness:1px">Carolyn Baker</div>
<div class="t" style="left:467.60px;top:751.60px;line-height:20px;font-size:12.20px;font-weight:400;color:#141414;-webkit-text-stroke:0.34px #141414;">1/16/2024</div>
<div class="t" style="left:563.80px;top:751.60px;line-height:20px;font-size:12.20px;font-weight:400;color:#141414;-webkit-text-stroke:0.34px #141414;">1/31/2024</div>
<div class="t" style="left:657.60px;top:751.60px;line-height:20px;font-size:12.20px;font-weight:400;color:#141414;-webkit-text-stroke:0.34px #141414;">1/31/2024</div>
<div class="t" style="right:719.60px;top:751.60px;line-height:20px;font-size:11.80px;font-weight:400;color:#141414;-webkit-text-stroke:0.34px #141414;">$18.00</div>
<div class="t" style="right:627.60px;top:751.60px;line-height:20px;font-size:11.80px;font-weight:400;color:#141414;-webkit-text-stroke:0.34px #141414;">40</div>
<div class="t" style="right:537.60px;top:751.60px;line-height:20px;font-size:11.80px;font-weight:400;color:#141414;-webkit-text-stroke:0.34px #141414;">22.00%</div>
<div class="t" style="right:430.00px;top:751.60px;line-height:20px;font-size:11.80px;font-weight:400;color:#141414;-webkit-text-stroke:0.34px #141414;">$24.00</div>
<div class="t" style="right:321.60px;top:751.60px;line-height:20px;font-size:11.80px;font-weight:400;color:#141414;-webkit-text-stroke:0.34px #141414;">0</div>
<div class="t" style="right:231.80px;top:751.60px;line-height:20px;font-size:11.80px;font-weight:400;color:#141414;-webkit-text-stroke:0.34px #141414;">$158.40</div>
<div class="t" style="right:142.00px;top:751.60px;line-height:20px;font-size:11.80px;font-weight:400;color:#141414;-webkit-text-stroke:0.34px #141414;">$720.00</div>
<div class="t" style="right:52.80px;top:751.60px;line-height:20px;font-size:11.80px;font-weight:400;color:#141414;-webkit-text-stroke:0.34px #141414;">$561.60</div>
<div class="r" style="left:305.40px;top:771.00px;width:1208.00px;height:2.00px;background:#e7eaee"></div>
<div class="r" style="left:304.40px;top:748.00px;width:2.00px;height:24.00px;background:#e7eaee"></div>
<div class="r" style="left:348.00px;top:748.00px;width:2.00px;height:24.00px;background:#e7eaee"></div>
<div class="r" style="left:460.00px;top:748.00px;width:2.00px;height:24.00px;background:#e7eaee"></div>
<div class="r" style="left:556.20px;top:748.00px;width:2.00px;height:24.00px;background:#e7eaee"></div>
<div class="r" style="left:650.00px;top:748.00px;width:2.00px;height:24.00px;background:#e7eaee"></div>
<div class="r" style="left:754.00px;top:748.00px;width:2.00px;height:24.00px;background:#e7eaee"></div>
<div class="r" style="left:844.00px;top:748.00px;width:2.00px;height:24.00px;background:#e7eaee"></div>
<div class="r" style="left:936.00px;top:748.00px;width:2.00px;height:24.00px;background:#e7eaee"></div>
<div class="r" style="left:1026.00px;top:748.00px;width:2.00px;height:24.00px;background:#e7eaee"></div>
<div class="r" style="left:1133.60px;top:748.00px;width:2.00px;height:24.00px;background:#e7eaee"></div>
<div class="r" style="left:1242.00px;top:748.00px;width:2.00px;height:24.00px;background:#e7eaee"></div>
<div class="r" style="left:1331.80px;top:748.00px;width:2.00px;height:24.00px;background:#e7eaee"></div>
<div class="r" style="left:1421.60px;top:748.00px;width:2.00px;height:24.00px;background:#e7eaee"></div>
<div class="r" style="left:318.00px;top:785.40px;width:18.00px;height:16.80px;border:2px solid #555;border-radius:3px;box-sizing:border-box;background:#fff"></div>
<div class="t" style="left:354.00px;top:777.20px;line-height:20px;font-size:12.20px;font-weight:400;color:#141414;-webkit-text-stroke:0.34px #141414;text-decoration:underline;text-decoration-color:#666;text-underline-offset:1.4px;text-decoration-thickness:1px">Chandler</div>
<div class="t" style="left:354.00px;top:794.00px;line-height:20px;font-size:12.20px;font-weight:400;color:#141414;-webkit-text-stroke:0.34px #141414;text-decoration:underline;text-decoration-color:#666;text-underline-offset:1.4px;text-decoration-thickness:1px">Bevington</div>
<div class="t" style="left:467.60px;top:785.40px;line-height:20px;font-size:12.20px;font-weight:400;color:#141414;-webkit-text-stroke:0.34px #141414;">1/16/2024</div>
<div class="t" style="left:563.80px;top:785.40px;line-height:20px;font-size:12.20px;font-weight:400;color:#141414;-webkit-text-stroke:0.34px #141414;">1/31/2024</div>
<div class="t" style="left:657.60px;top:785.40px;line-height:20px;font-size:12.20px;font-weight:400;color:#141414;-webkit-text-stroke:0.34px #141414;">1/31/2024</div>
<div class="t" style="right:719.60px;top:785.40px;line-height:20px;font-size:11.80px;font-weight:400;color:#141414;-webkit-text-stroke:0.34px #141414;">$17.00</div>
<div class="t" style="right:627.60px;top:785.40px;line-height:20px;font-size:11.80px;font-weight:400;color:#141414;-webkit-text-stroke:0.34px #141414;">40</div>
<div class="t" style="right:537.60px;top:785.40px;line-height:20px;font-size:11.80px;font-weight:400;color:#141414;-webkit-text-stroke:0.34px #141414;">30.00%</div>
<div class="t" style="right:430.00px;top:785.40px;line-height:20px;font-size:11.80px;font-weight:400;color:#141414;-webkit-text-stroke:0.34px #141414;">$26.00</div>
<div class="t" style="right:321.60px;top:785.40px;line-height:20px;font-size:11.80px;font-weight:400;color:#141414;-webkit-text-stroke:0.34px #141414;">8</div>
<div class="t" style="right:231.80px;top:785.40px;line-height:20px;font-size:11.80px;font-weight:400;color:#141414;-webkit-text-stroke:0.34px #141414;">$266.40</div>
<div class="t" style="right:142.00px;top:785.40px;line-height:20px;font-size:11.80px;font-weight:400;color:#141414;-webkit-text-stroke:0.34px #141414;">$888.00</div>
<div class="t" style="right:52.80px;top:785.40px;line-height:20px;font-size:11.80px;font-weight:400;color:#141414;-webkit-text-stroke:0.34px #141414;">$621.60</div>
<div class="r" style="left:305.40px;top:814.60px;width:1208.00px;height:2.00px;background:#e7eaee"></div>
<div class="r" style="left:304.40px;top:772.00px;width:2.00px;height:43.60px;background:#e7eaee"></div>
<div class="r" style="left:348.00px;top:772.00px;width:2.00px;height:43.60px;background:#e7eaee"></div>
<div class="r" style="left:460.00px;top:772.00px;width:2.00px;height:43.60px;background:#e7eaee"></div>
<div class="r" style="left:556.20px;top:772.00px;width:2.00px;height:43.60px;background:#e7eaee"></div>
<div class="r" style="left:650.00px;top:772.00px;width:2.00px;height:43.60px;background:#e7eaee"></div>
<div class="r" style="left:754.00px;top:772.00px;width:2.00px;height:43.60px;background:#e7eaee"></div>
<div class="r" style="left:844.00px;top:772.00px;width:2.00px;height:43.60px;background:#e7eaee"></div>
<div class="r" style="left:936.00px;top:772.00px;width:2.00px;height:43.60px;background:#e7eaee"></div>
<div class="r" style="left:1026.00px;top:772.00px;width:2.00px;height:43.60px;background:#e7eaee"></div>
<div class="r" style="left:1133.60px;top:772.00px;width:2.00px;height:43.60px;background:#e7eaee"></div>
<div class="r" style="left:1242.00px;top:772.00px;width:2.00px;height:43.60px;background:#e7eaee"></div>
<div class="r" style="left:1331.80px;top:772.00px;width:2.00px;height:43.60px;background:#e7eaee"></div>
<div class="r" style="left:1421.60px;top:772.00px;width:2.00px;height:43.60px;background:#e7eaee"></div>
<div class="r" style="left:318.00px;top:819.30px;width:18.00px;height:16.80px;border:2px solid #555;border-radius:3px;box-sizing:border-box;background:#fff"></div>
<div class="t" style="left:354.00px;top:819.30px;line-height:20px;font-size:12.20px;font-weight:400;color:#141414;-webkit-text-stroke:0.34px #141414;text-decoration:underline;text-decoration-color:#666;text-underline-offset:1.4px;text-decoration-thickness:1px">Donald Bradley</div>
<div class="t" style="left:467.60px;top:819.30px;line-height:20px;font-size:12.20px;font-weight:400;color:#141414;-webkit-text-stroke:0.34px #141414;">1/16/2024</div>
<div class="t" style="left:563.80px;top:819.30px;line-height:20px;font-size:12.20px;font-weight:400;color:#141414;-webkit-text-stroke:0.34px #141414;">1/31/2024</div>
<div class="t" style="left:657.60px;top:819.30px;line-height:20px;font-size:12.20px;font-weight:400;color:#141414;-webkit-text-stroke:0.34px #141414;">1/31/2024</div>
<div class="t" style="right:719.60px;top:819.30px;line-height:20px;font-size:11.80px;font-weight:400;color:#141414;-webkit-text-stroke:0.34px #141414;">$16.00</div>
<div class="t" style="right:627.60px;top:819.30px;line-height:20px;font-size:11.80px;font-weight:400;color:#141414;-webkit-text-stroke:0.34px #141414;">40</div>
<div class="t" style="right:537.60px;top:819.30px;line-height:20px;font-size:11.80px;font-weight:400;color:#141414;-webkit-text-stroke:0.34px #141414;">22.00%</div>
<div class="t" style="right:430.00px;top:819.30px;line-height:20px;font-size:11.80px;font-weight:400;color:#141414;-webkit-text-stroke:0.34px #141414;">$20.00</div>
<div class="t" style="right:321.60px;top:819.30px;line-height:20px;font-size:11.80px;font-weight:400;color:#141414;-webkit-text-stroke:0.34px #141414;">0</div>
<div class="t" style="right:231.80px;top:819.30px;line-height:20px;font-size:11.80px;font-weight:400;color:#141414;-webkit-text-stroke:0.34px #141414;">$140.80</div>
<div class="t" style="right:142.00px;top:819.30px;line-height:20px;font-size:11.80px;font-weight:400;color:#141414;-webkit-text-stroke:0.34px #141414;">$640.00</div>
<div class="t" style="right:52.80px;top:819.30px;line-height:20px;font-size:11.80px;font-weight:400;color:#141414;-webkit-text-stroke:0.34px #141414;">$499.20</div>
<div class="r" style="left:305.40px;top:838.80px;width:1208.00px;height:2.00px;background:#e7eaee"></div>
<div class="r" style="left:304.40px;top:815.60px;width:2.00px;height:24.20px;background:#e7eaee"></div>
<div class="r" style="left:348.00px;top:815.60px;width:2.00px;height:24.20px;background:#e7eaee"></div>
<div class="r" style="left:460.00px;top:815.60px;width:2.00px;height:24.20px;background:#e7eaee"></div>
<div class="r" style="left:556.20px;top:815.60px;width:2.00px;height:24.20px;background:#e7eaee"></div>
<div class="r" style="left:650.00px;top:815.60px;width:2.00px;height:24.20px;background:#e7eaee"></div>
<div class="r" style="left:754.00px;top:815.60px;width:2.00px;height:24.20px;background:#e7eaee"></div>
<div class="r" style="left:844.00px;top:815.60px;width:2.00px;height:24.20px;background:#e7eaee"></div>
<div class="r" style="left:936.00px;top:815.60px;width:2.00px;height:24.20px;background:#e7eaee"></div>
<div class="r" style="left:1026.00px;top:815.60px;width:2.00px;height:24.20px;background:#e7eaee"></div>
<div class="r" style="left:1133.60px;top:815.60px;width:2.00px;height:24.20px;background:#e7eaee"></div>
<div class="r" style="left:1242.00px;top:815.60px;width:2.00px;height:24.20px;background:#e7eaee"></div>
<div class="r" style="left:1331.80px;top:815.60px;width:2.00px;height:24.20px;background:#e7eaee"></div>
<div class="r" style="left:1421.60px;top:815.60px;width:2.00px;height:24.20px;background:#e7eaee"></div>
<div class="r" style="left:318.00px;top:843.90px;width:18.00px;height:16.80px;border:2px solid #555;border-radius:3px;box-sizing:border-box;background:#fff"></div>
<div class="t" style="left:354.00px;top:843.90px;line-height:20px;font-size:12.20px;font-weight:400;color:#141414;-webkit-text-stroke:0.34px #141414;text-decoration:underline;text-decoration-color:#666;text-underline-offset:1.4px;text-decoration-thickness:1px">Francine Bing</div>
<div class="t" style="left:467.60px;top:843.90px;line-height:20px;font-size:12.20px;font-weight:400;color:#141414;-webkit-text-stroke:0.34px #141414;">1/16/2024</div>
<div class="t" style="left:563.80px;top:843.90px;line-height:20px;font-size:12.20px;font-weight:400;color:#141414;-webkit-text-stroke:0.34px #141414;">1/31/2024</div>
<div class="t" style="left:657.60px;top:843.90px;line-height:20px;font-size:12.20px;font-weight:400;color:#141414;-webkit-text-stroke:0.34px #141414;">1/31/2024</div>
<div class="t" style="right:719.60px;top:843.90px;line-height:20px;font-size:11.80px;font-weight:400;color:#141414;-webkit-text-stroke:0.34px #141414;">$18.00</div>
<div class="t" style="right:627.60px;top:843.90px;line-height:20px;font-size:11.80px;font-weight:400;color:#141414;-webkit-text-stroke:0.34px #141414;">35</div>
<div class="t" style="right:537.60px;top:843.90px;line-height:20px;font-size:11.80px;font-weight:400;color:#141414;-webkit-text-stroke:0.34px #141414;">20.00%</div>
<div class="t" style="right:430.00px;top:843.90px;line-height:20px;font-size:11.80px;font-weight:400;color:#141414;-webkit-text-stroke:0.34px #141414;">$28.00</div>
<div class="t" style="right:321.60px;top:843.90px;line-height:20px;font-size:11.80px;font-weight:400;color:#141414;-webkit-text-stroke:0.34px #141414;">0</div>
<div class="t" style="right:231.80px;top:843.90px;line-height:20px;font-size:11.80px;font-weight:400;color:#141414;-webkit-text-stroke:0.34px #141414;">$126.00</div>
<div class="t" style="right:142.00px;top:843.90px;line-height:20px;font-size:11.80px;font-weight:400;color:#141414;-webkit-text-stroke:0.34px #141414;">$630.00</div>
<div class="t" style="right:52.80px;top:843.90px;line-height:20px;font-size:11.80px;font-weight:400;color:#141414;-webkit-text-stroke:0.34px #141414;">$504.00</div>
<div class="r" style="left:305.40px;top:863.80px;width:1208.00px;height:2.00px;background:#e7eaee"></div>
<div class="r" style="left:304.40px;top:839.80px;width:2.00px;height:25.00px;background:#e7eaee"></div>
<div class="r" style="left:348.00px;top:839.80px;width:2.00px;height:25.00px;background:#e7eaee"></div>
<div class="r" style="left:460.00px;top:839.80px;width:2.00px;height:25.00px;background:#e7eaee"></div>
<div class="r" style="left:556.20px;top:839.80px;width:2.00px;height:25.00px;background:#e7eaee"></div>
<div class="r" style="left:650.00px;top:839.80px;width:2.00px;height:25.00px;background:#e7eaee"></div>
<div class="r" style="left:754.00px;top:839.80px;width:2.00px;height:25.00px;background:#e7eaee"></div>
<div class="r" style="left:844.00px;top:839.80px;width:2.00px;height:25.00px;background:#e7eaee"></div>
<div class="r" style="left:936.00px;top:839.80px;width:2.00px;height:25.00px;background:#e7eaee"></div>
<div class="r" style="left:1026.00px;top:839.80px;width:2.00px;height:25.00px;background:#e7eaee"></div>
<div class="r" style="left:1133.60px;top:839.80px;width:2.00px;height:25.00px;background:#e7eaee"></div>
<div class="r" style="left:1242.00px;top:839.80px;width:2.00px;height:25.00px;background:#e7eaee"></div>
<div class="r" style="left:1331.80px;top:839.80px;width:2.00px;height:25.00px;background:#e7eaee"></div>
<div class="r" style="left:1421.60px;top:839.80px;width:2.00px;height:25.00px;background:#e7eaee"></div>
<div class="r" style="left:278.60px;top:863.80px;width:1234.80px;height:2.00px;background:#e7eaee"></div>
</div>
<div class="r" style="left:1510.00px;top:304.60px;width:3.40px;height:229.00px;background:#8c8c8c;border-radius:2px"></div>
</div></body></html>
